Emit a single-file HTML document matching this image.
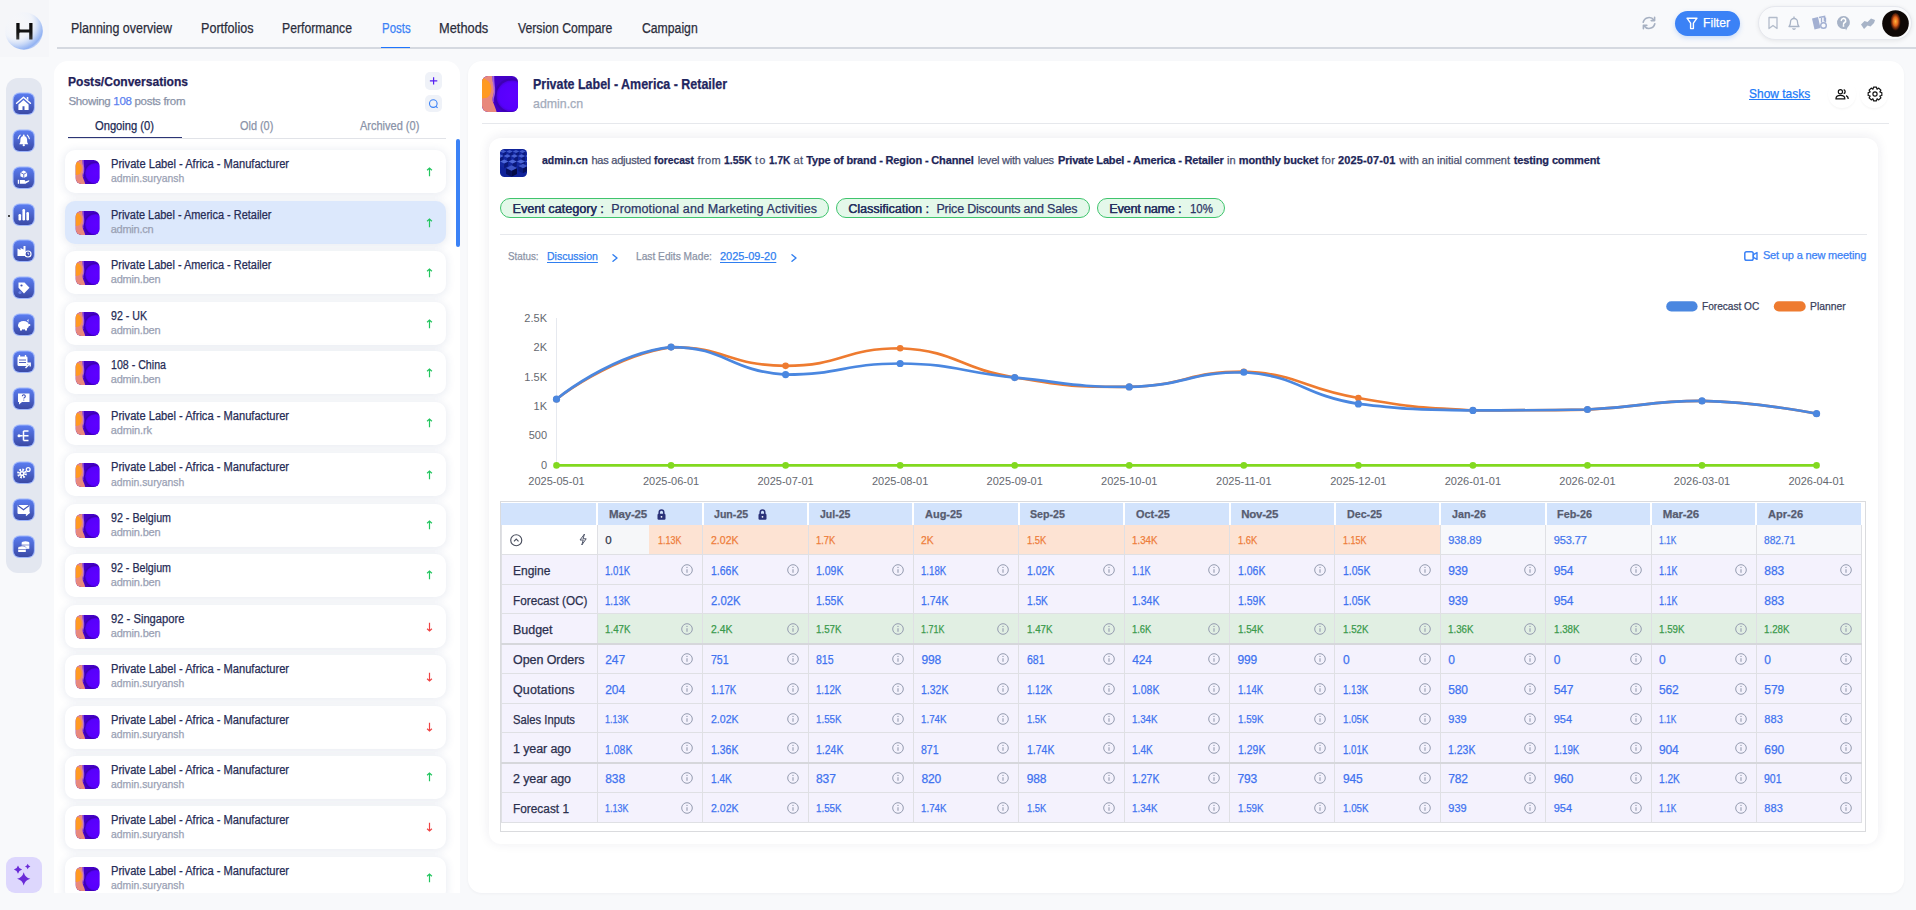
<!DOCTYPE html>
<html><head><meta charset="utf-8"><title>Posts</title>
<style>
html,body{margin:0;padding:0;}
body{width:1916px;height:910px;overflow:hidden;background:#f8f9fb;position:relative;font-family:"Liberation Sans",sans-serif;}
.t{position:absolute;white-space:nowrap;-webkit-text-stroke:0.25px currentColor;}
.r{position:absolute;box-sizing:border-box;}
svg{position:absolute;overflow:visible;}
</style></head><body>

<div class="r" style="left:0.00px;top:0.00px;width:49.00px;height:57.00px;background:#f5f6f9;"></div>
<svg style="left:4.6px;top:12px" width="38" height="38" viewBox="0 0 38 38">
<defs><radialGradient id="lg" cx="0.3" cy="0.28" r="0.82"><stop offset="0" stop-color="#ffffff" stop-opacity="0"/><stop offset="0.5" stop-color="#e3ecfc" stop-opacity="0.25"/><stop offset="0.8" stop-color="#9dbbf4" stop-opacity="0.8"/><stop offset="0.9" stop-color="#86aaf2" stop-opacity="0.9"/><stop offset="1" stop-color="#a8c2f5" stop-opacity="0.4"/></radialGradient></defs>
<circle cx="19" cy="19" r="18.8" fill="url(#lg)"/>
<linearGradient id="hg" x1="0" y1="0" x2="0" y2="1"><stop offset="0" stop-color="#0a0a0a"/><stop offset="0.6" stop-color="#151515"/><stop offset="1" stop-color="#3a3a3a"/></linearGradient><path d="M11.3 10.9h3.3v5.6c0 .6.4 .9 1 .9h8.6v-6.5h3.3v16.7h-3.3v-7.2h-9c-.6 0-.9.3-.9.9v6.3h-3z" fill="url(#hg)"/>
</svg>
<div class="t " style="left:71.30px;top:20.55px;font-size:14px;line-height:14px;color:#2b2d3c;transform:scaleX(0.8885);transform-origin:0 0;">Planning overview</div>
<div class="t " style="left:201.00px;top:20.55px;font-size:14px;line-height:14px;color:#2b2d3c;transform:scaleX(0.8993);transform-origin:0 0;">Portfolios</div>
<div class="t " style="left:282.40px;top:20.55px;font-size:14px;line-height:14px;color:#2b2d3c;transform:scaleX(0.8734);transform-origin:0 0;">Performance</div>
<div class="t " style="left:381.50px;top:20.55px;font-size:14px;line-height:14px;color:#3b82f6;transform:scaleX(0.8171);transform-origin:0 0;">Posts</div>
<div class="t " style="left:439.00px;top:20.55px;font-size:14px;line-height:14px;color:#2b2d3c;transform:scaleX(0.9164);transform-origin:0 0;">Methods</div>
<div class="t " style="left:517.80px;top:20.55px;font-size:14px;line-height:14px;color:#2b2d3c;transform:scaleX(0.8729);transform-origin:0 0;">Version Compare</div>
<div class="t " style="left:641.50px;top:20.55px;font-size:14px;line-height:14px;color:#2b2d3c;transform:scaleX(0.8725);transform-origin:0 0;">Campaign</div>
<div class="r" style="left:57.00px;top:47.00px;width:1859.00px;height:2.00px;background:#d5d9e0;"></div>
<div class="r" style="left:381.00px;top:46.60px;width:29.00px;height:1.60px;background:#1f75fe;"></div>
<svg style="left:1641px;top:16px" width="16" height="14" viewBox="0 0 16 14">
<path d="M2.2 6.2A6 6 0 0 1 13 4.2M13.8 7.8A6 6 0 0 1 3 9.8" fill="none" stroke="#a7b1c2" stroke-width="1.6" stroke-linecap="round"/>
<path d="M13.6 1.2v3.4h-3.4M2.4 12.8V9.4h3.4" fill="none" stroke="#a7b1c2" stroke-width="1.6" stroke-linecap="round" stroke-linejoin="round"/>
</svg>
<div class="r" style="left:1675.00px;top:11.00px;width:65.00px;height:25.00px;background:#3b82f6;border-radius:13px;box-shadow:0 2px 5px rgba(59,130,246,0.25);"></div>
<svg style="left:1686px;top:17px" width="12" height="13" viewBox="0 0 12 13">
<path d="M1 1.2h10L7.4 6.2v5.4H4.6V6.2z" fill="none" stroke="#fff" stroke-width="1.4" stroke-linejoin="round"/></svg>
<div class="t " style="left:1702.70px;top:17.06px;font-size:12.8px;line-height:12.8px;color:#ffffff;transform:scaleX(0.9502);transform-origin:0 0;">Filter</div>
<div class="r" style="left:1758.00px;top:6.00px;width:154.00px;height:34.00px;background:#f9fafc;border-radius:17px;border:1px solid #e6e8ee;box-shadow:0 1px 4px rgba(0,0,0,0.08);"></div>
<svg style="left:1766px;top:16px" width="14" height="14" viewBox="0 0 14 14">
<path d="M3 1.5h8v11l-4-3-4 3z" fill="none" stroke="#b3bccb" stroke-width="1.3" stroke-linejoin="round"/></svg>
<svg style="left:1787px;top:15px" width="14" height="16" viewBox="0 0 14 16">
<path d="M2 11.5c1.2-1 1.5-2.4 1.5-4.5a3.5 3.5 0 0 1 7 0c0 2.1.3 3.5 1.5 4.5z" fill="none" stroke="#a9b4c6" stroke-width="1.3" stroke-linejoin="round"/>
<path d="M5.6 13.3a1.5 1.5 0 0 0 2.8 0" fill="none" stroke="#a9b4c6" stroke-width="1.3"/><path d="M7 1.5v1.5" stroke="#a9b4c6" stroke-width="1.3"/></svg>
<svg style="left:1811px;top:15px" width="17" height="16" viewBox="0 0 17 16">
<path d="M1 3.5l6-1.5 2.5 11-6 1.5z" fill="#a3b0d2"/><path d="M8 2.5l5.5-1v5" fill="none" stroke="#a3b0d2" stroke-width="1.6"/>
<circle cx="12.5" cy="10.5" r="2.8" fill="none" stroke="#a3b0d2" stroke-width="1.4"/><path d="M10.5 3v4.5M14.5 2.5v5" stroke="#a3b0d2" stroke-width="1.3"/></svg>
<svg style="left:1836px;top:15px" width="15" height="16" viewBox="0 0 15 16">
<path d="M7.5 1a6.5 6.5 0 1 0 2 12.7L10 15.5 11.5 12.5A6.5 6.5 0 0 0 7.5 1z" fill="#a7b3c7"/>
<path d="M5.3 5.6a2.2 2.2 0 1 1 3.3 1.9c-.8.5-1.1.9-1.1 1.7" fill="none" stroke="#fff" stroke-width="1.5" stroke-linecap="round"/><circle cx="7.5" cy="10.9" r="0.9" fill="#fff"/></svg>
<svg style="left:1860px;top:16px" width="16" height="14" viewBox="0 0 16 14">
<path d="M1 8.5l3.5-3.5 3 1 3.5-3.5 4 1.5-1 3-3.5 3.5-3-1-3.5 3.5z" fill="#a7b3c7"/></svg>
<svg style="left:1882px;top:9.5px" width="27" height="27" viewBox="0 0 27 27">
<defs><radialGradient id="av" cx="0.5" cy="0.42" r="0.5"><stop offset="0" stop-color="#ffb43a"/><stop offset="0.45" stop-color="#e0601a"/><stop offset="0.8" stop-color="#6a2208" stop-opacity="0.7"/><stop offset="1" stop-color="#120805" stop-opacity="0"/></radialGradient></defs>
<circle cx="13.5" cy="13.5" r="13.3" fill="#0e0806"/><ellipse cx="13.5" cy="13" rx="5.6" ry="10" fill="url(#av)"/></svg>
<div class="r" style="left:6.30px;top:78.00px;width:35.70px;height:495.00px;background:#e3e7f0;border-radius:12px;"></div>
<svg width="0" height="0" style="position:absolute"><defs><linearGradient id="ig" x1="0" y1="0" x2="0" y2="1"><stop offset="0" stop-color="#5a7cf0"/><stop offset="1" stop-color="#3b4aa6"/></linearGradient></defs></svg>
<svg style="left:13.3px;top:92.80px" width="21.5" height="21.5" viewBox="0 0 21.5 21.5"><rect x="-0.4" y="-0.4" width="22.3" height="22.3" rx="6.8" fill="#88a6ff" opacity="0.75"/><rect x="0.6" y="0.6" width="20.3" height="20.3" rx="6" fill="url(#ig)"/><path d="M3.6 10.3L10.5 4.3 17.4 10.3" fill="none" stroke="#fff" stroke-width="1.5" stroke-linecap="round" stroke-linejoin="round"/><path d="M13.8 3.9h1.5v3.3l-1.5-1.3z" fill="#fff"/><path d="M5.4 11.6L10.5 6.9 15.6 11.6V16.9H11.5V13.2H9.5V16.9H5.4z" fill="#fff"/></svg>
<svg style="left:13.3px;top:129.70px" width="21.5" height="21.5" viewBox="0 0 21.5 21.5"><rect x="-0.4" y="-0.4" width="22.3" height="22.3" rx="6.8" fill="#88a6ff" opacity="0.75"/><rect x="0.6" y="0.6" width="20.3" height="20.3" rx="6" fill="url(#ig)"/><path d="M6.2 14.2C7.3 13.2 7.4 11.8 7.4 9.8C7.4 7.6 8.9 5.9 10.75 5.9C12.6 5.9 14.1 7.6 14.1 9.8C14.1 11.8 14.2 13.2 15.3 14.2Z" fill="#fff"/><circle cx="10.75" cy="15.2" r="1.15" fill="#fff"/><circle cx="10.75" cy="5.4" r="0.9" fill="#fff"/><path d="M5.2 8.6A6.5 6.5 0 0 1 7.2 5.1M16.3 8.6A6.5 6.5 0 0 0 14.3 5.1" fill="none" stroke="#fff" stroke-width="1.1" stroke-linecap="round"/></svg>
<svg style="left:13.3px;top:166.60px" width="21.5" height="21.5" viewBox="0 0 21.5 21.5"><rect x="-0.4" y="-0.4" width="22.3" height="22.3" rx="6.8" fill="#88a6ff" opacity="0.75"/><rect x="0.6" y="0.6" width="20.3" height="20.3" rx="6" fill="url(#ig)"/><path d="M10.75 3.6L14.1 5.4V9.3L10.75 11.1L7.4 9.3V5.4Z" fill="#fff"/><path d="M7.4 5.4L10.75 7.2L14.1 5.4M10.75 7.2V11.1" fill="none" stroke="#4456c0" stroke-width="0.8"/><rect x="4.8" y="12.8" width="1.4" height="4" fill="#fff"/><path d="M7 13.1H11.3C12.2 13.1 12.5 13.9 11.9 14.4L15.4 13.4C16.3 13.2 16.7 14 16 14.5L12.4 16.7H7Z" fill="#fff"/></svg>
<svg style="left:13.3px;top:203.50px" width="21.5" height="21.5" viewBox="0 0 21.5 21.5"><rect x="-0.4" y="-0.4" width="22.3" height="22.3" rx="6.8" fill="#88a6ff" opacity="0.75"/><rect x="0.6" y="0.6" width="20.3" height="20.3" rx="6" fill="url(#ig)"/><rect x="5.5" y="10" width="2.6" height="6.5" rx="1.2" fill="#fff"/><rect x="9.45" y="5" width="2.6" height="11.5" rx="1.2" fill="#fff"/><rect x="13.4" y="8" width="2.6" height="8.5" rx="1.2" fill="#fff"/></svg>
<svg style="left:13.3px;top:240.40px" width="21.5" height="21.5" viewBox="0 0 21.5 21.5"><rect x="-0.4" y="-0.4" width="22.3" height="22.3" rx="6.8" fill="#88a6ff" opacity="0.75"/><rect x="0.6" y="0.6" width="20.3" height="20.3" rx="6" fill="url(#ig)"/><path d="M4.5 16V8.5l3 1.5V8l3 1.5V6h2v10z" fill="#fff"/><circle cx="15" cy="14" r="3" fill="#3f51b5" stroke="#fff" stroke-width="1.2"/><path d="M15 12.5v1.6h1.2" stroke="#fff" stroke-width="0.9" fill="none"/></svg>
<svg style="left:13.3px;top:277.30px" width="21.5" height="21.5" viewBox="0 0 21.5 21.5"><rect x="-0.4" y="-0.4" width="22.3" height="22.3" rx="6.8" fill="#88a6ff" opacity="0.75"/><rect x="0.6" y="0.6" width="20.3" height="20.3" rx="6" fill="url(#ig)"/><path d="M5.5 5.5h6l5 5.25-5.5 5.75-5.5-5.75z" fill="#fff"/><circle cx="8.5" cy="8.5" r="1.1" fill="#3f51b5"/><circle cx="7" cy="15.5" r="1.6" fill="#6f86e8"/></svg>
<svg style="left:13.3px;top:314.20px" width="21.5" height="21.5" viewBox="0 0 21.5 21.5"><rect x="-0.4" y="-0.4" width="22.3" height="22.3" rx="6.8" fill="#88a6ff" opacity="0.75"/><rect x="0.6" y="0.6" width="20.3" height="20.3" rx="6" fill="url(#ig)"/><ellipse cx="10.5" cy="11.2" rx="5.5" ry="4.3" fill="#fff"/><path d="M7 14.5v2h2v-1.5M12 14.5v2h2v-1.5" fill="#fff"/><path d="M14 6.5l1.5-1.5v3" fill="#fff"/><circle cx="16.3" cy="11" r="1.1" fill="#fff"/></svg>
<svg style="left:13.3px;top:351.10px" width="21.5" height="21.5" viewBox="0 0 21.5 21.5"><rect x="-0.4" y="-0.4" width="22.3" height="22.3" rx="6.8" fill="#88a6ff" opacity="0.75"/><rect x="0.6" y="0.6" width="20.3" height="20.3" rx="6" fill="url(#ig)"/><rect x="4.5" y="5.5" width="10" height="9.5" rx="1.2" fill="#fff"/><path d="M6.5 4v2.5M12.5 4v2.5" stroke="#fff" stroke-width="1.3"/><path d="M6 9h7M6 11.5h7" stroke="#3f51b5" stroke-width="0.9"/><path d="M12.5 17l4.5-4.5M14 12.3h3.2v3.2" fill="none" stroke="#fff" stroke-width="1.4"/></svg>
<svg style="left:13.3px;top:388.00px" width="21.5" height="21.5" viewBox="0 0 21.5 21.5"><rect x="-0.4" y="-0.4" width="22.3" height="22.3" rx="6.8" fill="#88a6ff" opacity="0.75"/><rect x="0.6" y="0.6" width="20.3" height="20.3" rx="6" fill="url(#ig)"/><path d="M5 5.5h11.5v8.5H9l-3 2.5V14H5z" fill="#fff"/><path d="M9.3 8.2a1.5 1.5 0 1 1 2.3 1.3c-.5.3-.8.6-.8 1.1" fill="none" stroke="#3f51b5" stroke-width="1.1"/><circle cx="10.8" cy="12" r="0.6" fill="#3f51b5"/></svg>
<svg style="left:13.3px;top:424.90px" width="21.5" height="21.5" viewBox="0 0 21.5 21.5"><rect x="-0.4" y="-0.4" width="22.3" height="22.3" rx="6.8" fill="#88a6ff" opacity="0.75"/><rect x="0.6" y="0.6" width="20.3" height="20.3" rx="6" fill="url(#ig)"/><circle cx="6" cy="10.75" r="1.5" fill="#fff"/><path d="M6 10.75h3.5M10.5 6v9.5M10.5 6h5M10.5 10.75h5M10.5 15.5h5" fill="none" stroke="#fff" stroke-width="1.5"/></svg>
<svg style="left:13.3px;top:461.80px" width="21.5" height="21.5" viewBox="0 0 21.5 21.5"><rect x="-0.4" y="-0.4" width="22.3" height="22.3" rx="6.8" fill="#88a6ff" opacity="0.75"/><rect x="0.6" y="0.6" width="20.3" height="20.3" rx="6" fill="url(#ig)"/><circle cx="9" cy="11.5" r="3.6" fill="none" stroke="#fff" stroke-width="2.6" stroke-dasharray="1.6 1.2"/><circle cx="9" cy="11.5" r="2.6" fill="#fff"/><circle cx="9" cy="11.5" r="1" fill="#3f51b5"/><circle cx="15.2" cy="7.5" r="1.9" fill="none" stroke="#fff" stroke-width="1.3"/></svg>
<svg style="left:13.3px;top:498.70px" width="21.5" height="21.5" viewBox="0 0 21.5 21.5"><rect x="-0.4" y="-0.4" width="22.3" height="22.3" rx="6.8" fill="#88a6ff" opacity="0.75"/><rect x="0.6" y="0.6" width="20.3" height="20.3" rx="6" fill="url(#ig)"/><rect x="4.5" y="6" width="12" height="9" rx="1" fill="#fff"/><path d="M4.8 6.5l5.7 4.3 5.7-4.3" fill="none" stroke="#3f51b5" stroke-width="1.1"/><path d="M13 16.5l3.5-3.5" stroke="#fff" stroke-width="1.5"/></svg>
<svg style="left:13.3px;top:535.60px" width="21.5" height="21.5" viewBox="0 0 21.5 21.5"><rect x="-0.4" y="-0.4" width="22.3" height="22.3" rx="6.8" fill="#88a6ff" opacity="0.75"/><rect x="0.6" y="0.6" width="20.3" height="20.3" rx="6" fill="url(#ig)"/><ellipse cx="12.5" cy="6.8" rx="3.8" ry="1.6" fill="#fff"/><rect x="8.7" y="6.8" width="7.6" height="6" fill="#fff"/><ellipse cx="9" cy="11.5" rx="3.8" ry="1.6" fill="#fff" stroke="#3f51b5" stroke-width="0.6"/><rect x="5.2" y="11.5" width="7.6" height="4.5" fill="#fff"/><path d="M5.2 13.5h7.6M8.7 9h7.6" stroke="#3f51b5" stroke-width="0.6"/></svg>
<div class="r" style="left:7.60px;top:214.70px;width:2.00px;height:2.00px;background:#111;border-radius:1px;"></div>
<div class="r" style="left:6.00px;top:857.00px;width:36.00px;height:36.00px;background:#ddd7fd;border-radius:9px;"></div>
<svg style="left:6px;top:857px" width="36" height="36" viewBox="0 0 36 36"><path d="M17.70 15.20Q19.02 20.48 24.30 21.80Q19.02 23.12 17.70 28.40Q16.38 23.12 11.10 21.80Q16.38 20.48 17.70 15.20ZM12.00 8.50Q12.82 11.78 16.10 12.60Q12.82 13.42 12.00 16.70Q11.18 13.42 7.90 12.60Q11.18 11.78 12.00 8.50ZM21.70 6.80Q22.24 8.96 24.40 9.50Q22.24 10.04 21.70 12.20Q21.16 10.04 19.00 9.50Q21.16 8.96 21.70 6.80Z" fill="#6a2bd8"/></svg>
<div class="r" style="left:54.40px;top:61.00px;width:405.60px;height:832.00px;background:#ffffff;border-radius:14px 14px 0 0;"></div>
<div class="t " style="left:68.40px;top:75.10px;font-size:13px;line-height:13px;font-weight:700;color:#1f2158;transform:scaleX(0.9277);transform-origin:0 0;">Posts/Conversations</div>
<div class="t" style="left:68.4px;top:95.67px;font-size:11.5px;line-height:11.5px;color:#8a93a8;letter-spacing:-0.3px">Showing <span style="color:#5b7ff0">108</span> posts from</div>
<div class="r" style="left:424.80px;top:72.00px;width:17.20px;height:17.60px;background:#eff2f8;border-radius:5px;"></div>
<svg style="left:424.8px;top:72px" width="17.2" height="17.6" viewBox="0 0 17.2 17.6"><path d="M8.6 5.2v7.3M4.9 8.8h7.4" stroke="#5520f2" stroke-width="1.2"/></svg>
<div class="r" style="left:424.80px;top:94.50px;width:17.20px;height:17.50px;background:#eff2f8;border-radius:5px;"></div>
<svg style="left:424.8px;top:94.5px" width="17.2" height="17.5" viewBox="0 0 17.2 17.5"><circle cx="8.3" cy="8.6" r="3.8" fill="none" stroke="#3b82f6" stroke-width="1.1"/><path d="M11 11.3l1.6 1.6" stroke="#3b82f6" stroke-width="1.1"/></svg>
<div class="t " style="left:95.40px;top:120.44px;font-size:12px;line-height:12px;color:#222a55;transform:scaleX(0.9312);transform-origin:0 0;">Ongoing (0)</div>
<div class="t " style="left:240.30px;top:120.44px;font-size:12px;line-height:12px;color:#8a93a8;transform:scaleX(0.9083);transform-origin:0 0;">Old (0)</div>
<div class="t " style="left:359.70px;top:120.44px;font-size:12px;line-height:12px;color:#8a93a8;transform:scaleX(0.9168);transform-origin:0 0;">Archived (0)</div>
<div class="r" style="left:68.00px;top:137.90px;width:378.00px;height:1.10px;background:#e1e3e8;"></div>
<div class="r" style="left:68.00px;top:136.80px;width:114.00px;height:1.40px;background:#2c3575;"></div>
<div class="r" style="left:54.4px;top:140px;width:402px;height:753px;overflow:hidden;background:#ffffff">
<div class="r" style="left:10.80px;top:10.00px;width:380.70px;height:43.00px;background:#ffffff;border-radius:10px;box-shadow:0 1px 9px 1px rgba(40,70,130,0.10);"></div>
<svg width="25" height="24" viewBox="0 0 36 36" style="position:absolute;left:20.50px;top:19.70px"><defs><clipPath id="ac0"><rect width="36" height="36" rx="9"/></clipPath><radialGradient id="ap0" cx="0.5" cy="0.5" r="0.5"><stop offset="0" stop-color="#5e00ff"/><stop offset="0.85" stop-color="#5700fc"/><stop offset="1" stop-color="#4d00e0"/></radialGradient></defs><g clip-path="url(#ac0)"><rect width="36" height="36" fill="#4400c6"/><circle cx="30" cy="20" r="16.5" fill="none" stroke="#3a00a8" stroke-width="2.5" opacity="0.6"/><circle cx="30" cy="20" r="15.5" fill="url(#ap0)"/><path d="M0 0H10.2C10.5 6 12 10 12 15C12 19 9.5 22 11 26C12.5 30 14 33 14.6 36H0Z" fill="#e8887c"/><path d="M0 1.9C4 2.5 9 6 9.3 12C9.5 17 7.5 20 5 21.7L0 22.5Z" fill="#ff9a22"/><path d="M10.2 0H12.2C12 6 13.6 12 13.1 17C12.6 21 11 23 12 26L10.8 25.5C9.6 22 12 19 11.5 15C11 10 10.4 6 10.2 0Z" fill="#b874e0" opacity="0.8"/></g></svg>
<div class="t " style="left:56.30px;top:17.94px;font-size:12px;line-height:12px;color:#262c56;transform:scaleX(0.9268);transform-origin:0 0;">Private Label - Africa - Manufacturer</div>
<div class="t " style="left:56.30px;top:33.29px;font-size:11px;line-height:11px;color:#9aa1b4;transform:scaleX(0.9439);transform-origin:0 0;">admin.suryansh</div>
<svg style="left:372.00px;top:26.60px" width="7" height="10" viewBox="0 0 7 10"><path d="M3.5 9.2V1M1.1 3.3l2.4-2.3 2.4 2.3" fill="none" stroke="#22c55e" stroke-width="1.2"/></svg>
<div class="r" style="left:10.80px;top:61.00px;width:380.70px;height:43.00px;background:#dce8fc;border-radius:10px;box-shadow:0 1px 9px 1px rgba(40,70,130,0.10);"></div>
<svg width="25" height="24" viewBox="0 0 36 36" style="position:absolute;left:20.50px;top:70.70px"><defs><clipPath id="ac1"><rect width="36" height="36" rx="9"/></clipPath><radialGradient id="ap1" cx="0.5" cy="0.5" r="0.5"><stop offset="0" stop-color="#5e00ff"/><stop offset="0.85" stop-color="#5700fc"/><stop offset="1" stop-color="#4d00e0"/></radialGradient></defs><g clip-path="url(#ac1)"><rect width="36" height="36" fill="#4400c6"/><circle cx="30" cy="20" r="16.5" fill="none" stroke="#3a00a8" stroke-width="2.5" opacity="0.6"/><circle cx="30" cy="20" r="15.5" fill="url(#ap1)"/><path d="M0 0H10.2C10.5 6 12 10 12 15C12 19 9.5 22 11 26C12.5 30 14 33 14.6 36H0Z" fill="#e8887c"/><path d="M0 1.9C4 2.5 9 6 9.3 12C9.5 17 7.5 20 5 21.7L0 22.5Z" fill="#ff9a22"/><path d="M10.2 0H12.2C12 6 13.6 12 13.1 17C12.6 21 11 23 12 26L10.8 25.5C9.6 22 12 19 11.5 15C11 10 10.4 6 10.2 0Z" fill="#b874e0" opacity="0.8"/></g></svg>
<div class="t " style="left:56.30px;top:68.94px;font-size:12px;line-height:12px;color:#262c56;transform:scaleX(0.9114);transform-origin:0 0;">Private Label - America - Retailer</div>
<div class="t " style="left:56.30px;top:84.29px;font-size:11px;line-height:11px;color:#9aa1b4;letter-spacing:-0.237px;">admin.cn</div>
<svg style="left:372.00px;top:77.60px" width="7" height="10" viewBox="0 0 7 10"><path d="M3.5 9.2V1M1.1 3.3l2.4-2.3 2.4 2.3" fill="none" stroke="#22c55e" stroke-width="1.2"/></svg>
<div class="r" style="left:10.80px;top:111.10px;width:380.70px;height:43.00px;background:#ffffff;border-radius:10px;box-shadow:0 1px 9px 1px rgba(40,70,130,0.10);"></div>
<svg width="25" height="24" viewBox="0 0 36 36" style="position:absolute;left:20.50px;top:120.80px"><defs><clipPath id="ac2"><rect width="36" height="36" rx="9"/></clipPath><radialGradient id="ap2" cx="0.5" cy="0.5" r="0.5"><stop offset="0" stop-color="#5e00ff"/><stop offset="0.85" stop-color="#5700fc"/><stop offset="1" stop-color="#4d00e0"/></radialGradient></defs><g clip-path="url(#ac2)"><rect width="36" height="36" fill="#4400c6"/><circle cx="30" cy="20" r="16.5" fill="none" stroke="#3a00a8" stroke-width="2.5" opacity="0.6"/><circle cx="30" cy="20" r="15.5" fill="url(#ap2)"/><path d="M0 0H10.2C10.5 6 12 10 12 15C12 19 9.5 22 11 26C12.5 30 14 33 14.6 36H0Z" fill="#e8887c"/><path d="M0 1.9C4 2.5 9 6 9.3 12C9.5 17 7.5 20 5 21.7L0 22.5Z" fill="#ff9a22"/><path d="M10.2 0H12.2C12 6 13.6 12 13.1 17C12.6 21 11 23 12 26L10.8 25.5C9.6 22 12 19 11.5 15C11 10 10.4 6 10.2 0Z" fill="#b874e0" opacity="0.8"/></g></svg>
<div class="t " style="left:56.30px;top:119.04px;font-size:12px;line-height:12px;color:#262c56;transform:scaleX(0.9114);transform-origin:0 0;">Private Label - America - Retailer</div>
<div class="t " style="left:56.30px;top:134.39px;font-size:11px;line-height:11px;color:#9aa1b4;letter-spacing:-0.171px;">admin.ben</div>
<svg style="left:372.00px;top:127.70px" width="7" height="10" viewBox="0 0 7 10"><path d="M3.5 9.2V1M1.1 3.3l2.4-2.3 2.4 2.3" fill="none" stroke="#22c55e" stroke-width="1.2"/></svg>
<div class="r" style="left:10.80px;top:162.10px;width:380.70px;height:43.00px;background:#ffffff;border-radius:10px;box-shadow:0 1px 9px 1px rgba(40,70,130,0.10);"></div>
<svg width="25" height="24" viewBox="0 0 36 36" style="position:absolute;left:20.50px;top:171.80px"><defs><clipPath id="ac3"><rect width="36" height="36" rx="9"/></clipPath><radialGradient id="ap3" cx="0.5" cy="0.5" r="0.5"><stop offset="0" stop-color="#5e00ff"/><stop offset="0.85" stop-color="#5700fc"/><stop offset="1" stop-color="#4d00e0"/></radialGradient></defs><g clip-path="url(#ac3)"><rect width="36" height="36" fill="#4400c6"/><circle cx="30" cy="20" r="16.5" fill="none" stroke="#3a00a8" stroke-width="2.5" opacity="0.6"/><circle cx="30" cy="20" r="15.5" fill="url(#ap3)"/><path d="M0 0H10.2C10.5 6 12 10 12 15C12 19 9.5 22 11 26C12.5 30 14 33 14.6 36H0Z" fill="#e8887c"/><path d="M0 1.9C4 2.5 9 6 9.3 12C9.5 17 7.5 20 5 21.7L0 22.5Z" fill="#ff9a22"/><path d="M10.2 0H12.2C12 6 13.6 12 13.1 17C12.6 21 11 23 12 26L10.8 25.5C9.6 22 12 19 11.5 15C11 10 10.4 6 10.2 0Z" fill="#b874e0" opacity="0.8"/></g></svg>
<div class="t " style="left:56.30px;top:170.04px;font-size:12px;line-height:12px;color:#262c56;transform:scaleX(0.8850);transform-origin:0 0;">92 - UK</div>
<div class="t " style="left:56.30px;top:185.39px;font-size:11px;line-height:11px;color:#9aa1b4;letter-spacing:-0.171px;">admin.ben</div>
<svg style="left:372.00px;top:178.70px" width="7" height="10" viewBox="0 0 7 10"><path d="M3.5 9.2V1M1.1 3.3l2.4-2.3 2.4 2.3" fill="none" stroke="#22c55e" stroke-width="1.2"/></svg>
<div class="r" style="left:10.80px;top:211.10px;width:380.70px;height:43.00px;background:#ffffff;border-radius:10px;box-shadow:0 1px 9px 1px rgba(40,70,130,0.10);"></div>
<svg width="25" height="24" viewBox="0 0 36 36" style="position:absolute;left:20.50px;top:220.80px"><defs><clipPath id="ac4"><rect width="36" height="36" rx="9"/></clipPath><radialGradient id="ap4" cx="0.5" cy="0.5" r="0.5"><stop offset="0" stop-color="#5e00ff"/><stop offset="0.85" stop-color="#5700fc"/><stop offset="1" stop-color="#4d00e0"/></radialGradient></defs><g clip-path="url(#ac4)"><rect width="36" height="36" fill="#4400c6"/><circle cx="30" cy="20" r="16.5" fill="none" stroke="#3a00a8" stroke-width="2.5" opacity="0.6"/><circle cx="30" cy="20" r="15.5" fill="url(#ap4)"/><path d="M0 0H10.2C10.5 6 12 10 12 15C12 19 9.5 22 11 26C12.5 30 14 33 14.6 36H0Z" fill="#e8887c"/><path d="M0 1.9C4 2.5 9 6 9.3 12C9.5 17 7.5 20 5 21.7L0 22.5Z" fill="#ff9a22"/><path d="M10.2 0H12.2C12 6 13.6 12 13.1 17C12.6 21 11 23 12 26L10.8 25.5C9.6 22 12 19 11.5 15C11 10 10.4 6 10.2 0Z" fill="#b874e0" opacity="0.8"/></g></svg>
<div class="t " style="left:56.30px;top:219.04px;font-size:12px;line-height:12px;color:#262c56;transform:scaleX(0.8857);transform-origin:0 0;">108 - China</div>
<div class="t " style="left:56.30px;top:234.39px;font-size:11px;line-height:11px;color:#9aa1b4;letter-spacing:-0.171px;">admin.ben</div>
<svg style="left:372.00px;top:227.70px" width="7" height="10" viewBox="0 0 7 10"><path d="M3.5 9.2V1M1.1 3.3l2.4-2.3 2.4 2.3" fill="none" stroke="#22c55e" stroke-width="1.2"/></svg>
<div class="r" style="left:10.80px;top:261.60px;width:380.70px;height:43.00px;background:#ffffff;border-radius:10px;box-shadow:0 1px 9px 1px rgba(40,70,130,0.10);"></div>
<svg width="25" height="24" viewBox="0 0 36 36" style="position:absolute;left:20.50px;top:271.30px"><defs><clipPath id="ac5"><rect width="36" height="36" rx="9"/></clipPath><radialGradient id="ap5" cx="0.5" cy="0.5" r="0.5"><stop offset="0" stop-color="#5e00ff"/><stop offset="0.85" stop-color="#5700fc"/><stop offset="1" stop-color="#4d00e0"/></radialGradient></defs><g clip-path="url(#ac5)"><rect width="36" height="36" fill="#4400c6"/><circle cx="30" cy="20" r="16.5" fill="none" stroke="#3a00a8" stroke-width="2.5" opacity="0.6"/><circle cx="30" cy="20" r="15.5" fill="url(#ap5)"/><path d="M0 0H10.2C10.5 6 12 10 12 15C12 19 9.5 22 11 26C12.5 30 14 33 14.6 36H0Z" fill="#e8887c"/><path d="M0 1.9C4 2.5 9 6 9.3 12C9.5 17 7.5 20 5 21.7L0 22.5Z" fill="#ff9a22"/><path d="M10.2 0H12.2C12 6 13.6 12 13.1 17C12.6 21 11 23 12 26L10.8 25.5C9.6 22 12 19 11.5 15C11 10 10.4 6 10.2 0Z" fill="#b874e0" opacity="0.8"/></g></svg>
<div class="t " style="left:56.30px;top:269.54px;font-size:12px;line-height:12px;color:#262c56;transform:scaleX(0.9268);transform-origin:0 0;">Private Label - Africa - Manufacturer</div>
<div class="t " style="left:56.30px;top:284.89px;font-size:11px;line-height:11px;color:#9aa1b4;letter-spacing:-0.106px;">admin.rk</div>
<svg style="left:372.00px;top:278.20px" width="7" height="10" viewBox="0 0 7 10"><path d="M3.5 9.2V1M1.1 3.3l2.4-2.3 2.4 2.3" fill="none" stroke="#22c55e" stroke-width="1.2"/></svg>
<div class="r" style="left:10.80px;top:313.30px;width:380.70px;height:43.00px;background:#ffffff;border-radius:10px;box-shadow:0 1px 9px 1px rgba(40,70,130,0.10);"></div>
<svg width="25" height="24" viewBox="0 0 36 36" style="position:absolute;left:20.50px;top:323.00px"><defs><clipPath id="ac6"><rect width="36" height="36" rx="9"/></clipPath><radialGradient id="ap6" cx="0.5" cy="0.5" r="0.5"><stop offset="0" stop-color="#5e00ff"/><stop offset="0.85" stop-color="#5700fc"/><stop offset="1" stop-color="#4d00e0"/></radialGradient></defs><g clip-path="url(#ac6)"><rect width="36" height="36" fill="#4400c6"/><circle cx="30" cy="20" r="16.5" fill="none" stroke="#3a00a8" stroke-width="2.5" opacity="0.6"/><circle cx="30" cy="20" r="15.5" fill="url(#ap6)"/><path d="M0 0H10.2C10.5 6 12 10 12 15C12 19 9.5 22 11 26C12.5 30 14 33 14.6 36H0Z" fill="#e8887c"/><path d="M0 1.9C4 2.5 9 6 9.3 12C9.5 17 7.5 20 5 21.7L0 22.5Z" fill="#ff9a22"/><path d="M10.2 0H12.2C12 6 13.6 12 13.1 17C12.6 21 11 23 12 26L10.8 25.5C9.6 22 12 19 11.5 15C11 10 10.4 6 10.2 0Z" fill="#b874e0" opacity="0.8"/></g></svg>
<div class="t " style="left:56.30px;top:321.24px;font-size:12px;line-height:12px;color:#262c56;transform:scaleX(0.9268);transform-origin:0 0;">Private Label - Africa - Manufacturer</div>
<div class="t " style="left:56.30px;top:336.59px;font-size:11px;line-height:11px;color:#9aa1b4;transform:scaleX(0.9439);transform-origin:0 0;">admin.suryansh</div>
<svg style="left:372.00px;top:329.90px" width="7" height="10" viewBox="0 0 7 10"><path d="M3.5 9.2V1M1.1 3.3l2.4-2.3 2.4 2.3" fill="none" stroke="#22c55e" stroke-width="1.2"/></svg>
<div class="r" style="left:10.80px;top:363.80px;width:380.70px;height:43.00px;background:#ffffff;border-radius:10px;box-shadow:0 1px 9px 1px rgba(40,70,130,0.10);"></div>
<svg width="25" height="24" viewBox="0 0 36 36" style="position:absolute;left:20.50px;top:373.50px"><defs><clipPath id="ac7"><rect width="36" height="36" rx="9"/></clipPath><radialGradient id="ap7" cx="0.5" cy="0.5" r="0.5"><stop offset="0" stop-color="#5e00ff"/><stop offset="0.85" stop-color="#5700fc"/><stop offset="1" stop-color="#4d00e0"/></radialGradient></defs><g clip-path="url(#ac7)"><rect width="36" height="36" fill="#4400c6"/><circle cx="30" cy="20" r="16.5" fill="none" stroke="#3a00a8" stroke-width="2.5" opacity="0.6"/><circle cx="30" cy="20" r="15.5" fill="url(#ap7)"/><path d="M0 0H10.2C10.5 6 12 10 12 15C12 19 9.5 22 11 26C12.5 30 14 33 14.6 36H0Z" fill="#e8887c"/><path d="M0 1.9C4 2.5 9 6 9.3 12C9.5 17 7.5 20 5 21.7L0 22.5Z" fill="#ff9a22"/><path d="M10.2 0H12.2C12 6 13.6 12 13.1 17C12.6 21 11 23 12 26L10.8 25.5C9.6 22 12 19 11.5 15C11 10 10.4 6 10.2 0Z" fill="#b874e0" opacity="0.8"/></g></svg>
<div class="t " style="left:56.30px;top:371.74px;font-size:12px;line-height:12px;color:#262c56;transform:scaleX(0.8905);transform-origin:0 0;">92 - Belgium</div>
<div class="t " style="left:56.30px;top:387.09px;font-size:11px;line-height:11px;color:#9aa1b4;letter-spacing:-0.171px;">admin.ben</div>
<svg style="left:372.00px;top:380.40px" width="7" height="10" viewBox="0 0 7 10"><path d="M3.5 9.2V1M1.1 3.3l2.4-2.3 2.4 2.3" fill="none" stroke="#22c55e" stroke-width="1.2"/></svg>
<div class="r" style="left:10.80px;top:413.70px;width:380.70px;height:43.00px;background:#ffffff;border-radius:10px;box-shadow:0 1px 9px 1px rgba(40,70,130,0.10);"></div>
<svg width="25" height="24" viewBox="0 0 36 36" style="position:absolute;left:20.50px;top:423.40px"><defs><clipPath id="ac8"><rect width="36" height="36" rx="9"/></clipPath><radialGradient id="ap8" cx="0.5" cy="0.5" r="0.5"><stop offset="0" stop-color="#5e00ff"/><stop offset="0.85" stop-color="#5700fc"/><stop offset="1" stop-color="#4d00e0"/></radialGradient></defs><g clip-path="url(#ac8)"><rect width="36" height="36" fill="#4400c6"/><circle cx="30" cy="20" r="16.5" fill="none" stroke="#3a00a8" stroke-width="2.5" opacity="0.6"/><circle cx="30" cy="20" r="15.5" fill="url(#ap8)"/><path d="M0 0H10.2C10.5 6 12 10 12 15C12 19 9.5 22 11 26C12.5 30 14 33 14.6 36H0Z" fill="#e8887c"/><path d="M0 1.9C4 2.5 9 6 9.3 12C9.5 17 7.5 20 5 21.7L0 22.5Z" fill="#ff9a22"/><path d="M10.2 0H12.2C12 6 13.6 12 13.1 17C12.6 21 11 23 12 26L10.8 25.5C9.6 22 12 19 11.5 15C11 10 10.4 6 10.2 0Z" fill="#b874e0" opacity="0.8"/></g></svg>
<div class="t " style="left:56.30px;top:421.64px;font-size:12px;line-height:12px;color:#262c56;transform:scaleX(0.8905);transform-origin:0 0;">92 - Belgium</div>
<div class="t " style="left:56.30px;top:436.99px;font-size:11px;line-height:11px;color:#9aa1b4;letter-spacing:-0.171px;">admin.ben</div>
<svg style="left:372.00px;top:430.30px" width="7" height="10" viewBox="0 0 7 10"><path d="M3.5 9.2V1M1.1 3.3l2.4-2.3 2.4 2.3" fill="none" stroke="#22c55e" stroke-width="1.2"/></svg>
<div class="r" style="left:10.80px;top:464.90px;width:380.70px;height:43.00px;background:#ffffff;border-radius:10px;box-shadow:0 1px 9px 1px rgba(40,70,130,0.10);"></div>
<svg width="25" height="24" viewBox="0 0 36 36" style="position:absolute;left:20.50px;top:474.60px"><defs><clipPath id="ac9"><rect width="36" height="36" rx="9"/></clipPath><radialGradient id="ap9" cx="0.5" cy="0.5" r="0.5"><stop offset="0" stop-color="#5e00ff"/><stop offset="0.85" stop-color="#5700fc"/><stop offset="1" stop-color="#4d00e0"/></radialGradient></defs><g clip-path="url(#ac9)"><rect width="36" height="36" fill="#4400c6"/><circle cx="30" cy="20" r="16.5" fill="none" stroke="#3a00a8" stroke-width="2.5" opacity="0.6"/><circle cx="30" cy="20" r="15.5" fill="url(#ap9)"/><path d="M0 0H10.2C10.5 6 12 10 12 15C12 19 9.5 22 11 26C12.5 30 14 33 14.6 36H0Z" fill="#e8887c"/><path d="M0 1.9C4 2.5 9 6 9.3 12C9.5 17 7.5 20 5 21.7L0 22.5Z" fill="#ff9a22"/><path d="M10.2 0H12.2C12 6 13.6 12 13.1 17C12.6 21 11 23 12 26L10.8 25.5C9.6 22 12 19 11.5 15C11 10 10.4 6 10.2 0Z" fill="#b874e0" opacity="0.8"/></g></svg>
<div class="t " style="left:56.30px;top:472.84px;font-size:12px;line-height:12px;color:#262c56;transform:scaleX(0.9337);transform-origin:0 0;">92 - Singapore</div>
<div class="t " style="left:56.30px;top:488.19px;font-size:11px;line-height:11px;color:#9aa1b4;letter-spacing:-0.171px;">admin.ben</div>
<svg style="left:372.00px;top:481.50px" width="7" height="10" viewBox="0 0 7 10"><path d="M3.5 0.8V9M1.1 6.7l2.4 2.3 2.4-2.3" fill="none" stroke="#ef4444" stroke-width="1.2"/></svg>
<div class="r" style="left:10.80px;top:515.00px;width:380.70px;height:43.00px;background:#ffffff;border-radius:10px;box-shadow:0 1px 9px 1px rgba(40,70,130,0.10);"></div>
<svg width="25" height="24" viewBox="0 0 36 36" style="position:absolute;left:20.50px;top:524.70px"><defs><clipPath id="ac10"><rect width="36" height="36" rx="9"/></clipPath><radialGradient id="ap10" cx="0.5" cy="0.5" r="0.5"><stop offset="0" stop-color="#5e00ff"/><stop offset="0.85" stop-color="#5700fc"/><stop offset="1" stop-color="#4d00e0"/></radialGradient></defs><g clip-path="url(#ac10)"><rect width="36" height="36" fill="#4400c6"/><circle cx="30" cy="20" r="16.5" fill="none" stroke="#3a00a8" stroke-width="2.5" opacity="0.6"/><circle cx="30" cy="20" r="15.5" fill="url(#ap10)"/><path d="M0 0H10.2C10.5 6 12 10 12 15C12 19 9.5 22 11 26C12.5 30 14 33 14.6 36H0Z" fill="#e8887c"/><path d="M0 1.9C4 2.5 9 6 9.3 12C9.5 17 7.5 20 5 21.7L0 22.5Z" fill="#ff9a22"/><path d="M10.2 0H12.2C12 6 13.6 12 13.1 17C12.6 21 11 23 12 26L10.8 25.5C9.6 22 12 19 11.5 15C11 10 10.4 6 10.2 0Z" fill="#b874e0" opacity="0.8"/></g></svg>
<div class="t " style="left:56.30px;top:522.94px;font-size:12px;line-height:12px;color:#262c56;transform:scaleX(0.9268);transform-origin:0 0;">Private Label - Africa - Manufacturer</div>
<div class="t " style="left:56.30px;top:538.29px;font-size:11px;line-height:11px;color:#9aa1b4;transform:scaleX(0.9439);transform-origin:0 0;">admin.suryansh</div>
<svg style="left:372.00px;top:531.60px" width="7" height="10" viewBox="0 0 7 10"><path d="M3.5 0.8V9M1.1 6.7l2.4 2.3 2.4-2.3" fill="none" stroke="#ef4444" stroke-width="1.2"/></svg>
<div class="r" style="left:10.80px;top:565.70px;width:380.70px;height:43.00px;background:#ffffff;border-radius:10px;box-shadow:0 1px 9px 1px rgba(40,70,130,0.10);"></div>
<svg width="25" height="24" viewBox="0 0 36 36" style="position:absolute;left:20.50px;top:575.40px"><defs><clipPath id="ac11"><rect width="36" height="36" rx="9"/></clipPath><radialGradient id="ap11" cx="0.5" cy="0.5" r="0.5"><stop offset="0" stop-color="#5e00ff"/><stop offset="0.85" stop-color="#5700fc"/><stop offset="1" stop-color="#4d00e0"/></radialGradient></defs><g clip-path="url(#ac11)"><rect width="36" height="36" fill="#4400c6"/><circle cx="30" cy="20" r="16.5" fill="none" stroke="#3a00a8" stroke-width="2.5" opacity="0.6"/><circle cx="30" cy="20" r="15.5" fill="url(#ap11)"/><path d="M0 0H10.2C10.5 6 12 10 12 15C12 19 9.5 22 11 26C12.5 30 14 33 14.6 36H0Z" fill="#e8887c"/><path d="M0 1.9C4 2.5 9 6 9.3 12C9.5 17 7.5 20 5 21.7L0 22.5Z" fill="#ff9a22"/><path d="M10.2 0H12.2C12 6 13.6 12 13.1 17C12.6 21 11 23 12 26L10.8 25.5C9.6 22 12 19 11.5 15C11 10 10.4 6 10.2 0Z" fill="#b874e0" opacity="0.8"/></g></svg>
<div class="t " style="left:56.30px;top:573.64px;font-size:12px;line-height:12px;color:#262c56;transform:scaleX(0.9268);transform-origin:0 0;">Private Label - Africa - Manufacturer</div>
<div class="t " style="left:56.30px;top:588.99px;font-size:11px;line-height:11px;color:#9aa1b4;transform:scaleX(0.9439);transform-origin:0 0;">admin.suryansh</div>
<svg style="left:372.00px;top:582.30px" width="7" height="10" viewBox="0 0 7 10"><path d="M3.5 0.8V9M1.1 6.7l2.4 2.3 2.4-2.3" fill="none" stroke="#ef4444" stroke-width="1.2"/></svg>
<div class="r" style="left:10.80px;top:615.60px;width:380.70px;height:43.00px;background:#ffffff;border-radius:10px;box-shadow:0 1px 9px 1px rgba(40,70,130,0.10);"></div>
<svg width="25" height="24" viewBox="0 0 36 36" style="position:absolute;left:20.50px;top:625.30px"><defs><clipPath id="ac12"><rect width="36" height="36" rx="9"/></clipPath><radialGradient id="ap12" cx="0.5" cy="0.5" r="0.5"><stop offset="0" stop-color="#5e00ff"/><stop offset="0.85" stop-color="#5700fc"/><stop offset="1" stop-color="#4d00e0"/></radialGradient></defs><g clip-path="url(#ac12)"><rect width="36" height="36" fill="#4400c6"/><circle cx="30" cy="20" r="16.5" fill="none" stroke="#3a00a8" stroke-width="2.5" opacity="0.6"/><circle cx="30" cy="20" r="15.5" fill="url(#ap12)"/><path d="M0 0H10.2C10.5 6 12 10 12 15C12 19 9.5 22 11 26C12.5 30 14 33 14.6 36H0Z" fill="#e8887c"/><path d="M0 1.9C4 2.5 9 6 9.3 12C9.5 17 7.5 20 5 21.7L0 22.5Z" fill="#ff9a22"/><path d="M10.2 0H12.2C12 6 13.6 12 13.1 17C12.6 21 11 23 12 26L10.8 25.5C9.6 22 12 19 11.5 15C11 10 10.4 6 10.2 0Z" fill="#b874e0" opacity="0.8"/></g></svg>
<div class="t " style="left:56.30px;top:623.54px;font-size:12px;line-height:12px;color:#262c56;transform:scaleX(0.9268);transform-origin:0 0;">Private Label - Africa - Manufacturer</div>
<div class="t " style="left:56.30px;top:638.89px;font-size:11px;line-height:11px;color:#9aa1b4;transform:scaleX(0.9439);transform-origin:0 0;">admin.suryansh</div>
<svg style="left:372.00px;top:632.20px" width="7" height="10" viewBox="0 0 7 10"><path d="M3.5 9.2V1M1.1 3.3l2.4-2.3 2.4 2.3" fill="none" stroke="#22c55e" stroke-width="1.2"/></svg>
<div class="r" style="left:10.80px;top:665.70px;width:380.70px;height:43.00px;background:#ffffff;border-radius:10px;box-shadow:0 1px 9px 1px rgba(40,70,130,0.10);"></div>
<svg width="25" height="24" viewBox="0 0 36 36" style="position:absolute;left:20.50px;top:675.40px"><defs><clipPath id="ac13"><rect width="36" height="36" rx="9"/></clipPath><radialGradient id="ap13" cx="0.5" cy="0.5" r="0.5"><stop offset="0" stop-color="#5e00ff"/><stop offset="0.85" stop-color="#5700fc"/><stop offset="1" stop-color="#4d00e0"/></radialGradient></defs><g clip-path="url(#ac13)"><rect width="36" height="36" fill="#4400c6"/><circle cx="30" cy="20" r="16.5" fill="none" stroke="#3a00a8" stroke-width="2.5" opacity="0.6"/><circle cx="30" cy="20" r="15.5" fill="url(#ap13)"/><path d="M0 0H10.2C10.5 6 12 10 12 15C12 19 9.5 22 11 26C12.5 30 14 33 14.6 36H0Z" fill="#e8887c"/><path d="M0 1.9C4 2.5 9 6 9.3 12C9.5 17 7.5 20 5 21.7L0 22.5Z" fill="#ff9a22"/><path d="M10.2 0H12.2C12 6 13.6 12 13.1 17C12.6 21 11 23 12 26L10.8 25.5C9.6 22 12 19 11.5 15C11 10 10.4 6 10.2 0Z" fill="#b874e0" opacity="0.8"/></g></svg>
<div class="t " style="left:56.30px;top:673.64px;font-size:12px;line-height:12px;color:#262c56;transform:scaleX(0.9268);transform-origin:0 0;">Private Label - Africa - Manufacturer</div>
<div class="t " style="left:56.30px;top:688.99px;font-size:11px;line-height:11px;color:#9aa1b4;transform:scaleX(0.9439);transform-origin:0 0;">admin.suryansh</div>
<svg style="left:372.00px;top:682.30px" width="7" height="10" viewBox="0 0 7 10"><path d="M3.5 0.8V9M1.1 6.7l2.4 2.3 2.4-2.3" fill="none" stroke="#ef4444" stroke-width="1.2"/></svg>
<div class="r" style="left:10.80px;top:716.80px;width:380.70px;height:43.00px;background:#ffffff;border-radius:10px;box-shadow:0 1px 9px 1px rgba(40,70,130,0.10);"></div>
<svg width="25" height="24" viewBox="0 0 36 36" style="position:absolute;left:20.50px;top:726.50px"><defs><clipPath id="ac14"><rect width="36" height="36" rx="9"/></clipPath><radialGradient id="ap14" cx="0.5" cy="0.5" r="0.5"><stop offset="0" stop-color="#5e00ff"/><stop offset="0.85" stop-color="#5700fc"/><stop offset="1" stop-color="#4d00e0"/></radialGradient></defs><g clip-path="url(#ac14)"><rect width="36" height="36" fill="#4400c6"/><circle cx="30" cy="20" r="16.5" fill="none" stroke="#3a00a8" stroke-width="2.5" opacity="0.6"/><circle cx="30" cy="20" r="15.5" fill="url(#ap14)"/><path d="M0 0H10.2C10.5 6 12 10 12 15C12 19 9.5 22 11 26C12.5 30 14 33 14.6 36H0Z" fill="#e8887c"/><path d="M0 1.9C4 2.5 9 6 9.3 12C9.5 17 7.5 20 5 21.7L0 22.5Z" fill="#ff9a22"/><path d="M10.2 0H12.2C12 6 13.6 12 13.1 17C12.6 21 11 23 12 26L10.8 25.5C9.6 22 12 19 11.5 15C11 10 10.4 6 10.2 0Z" fill="#b874e0" opacity="0.8"/></g></svg>
<div class="t " style="left:56.30px;top:724.74px;font-size:12px;line-height:12px;color:#262c56;transform:scaleX(0.9268);transform-origin:0 0;">Private Label - Africa - Manufacturer</div>
<div class="t " style="left:56.30px;top:740.09px;font-size:11px;line-height:11px;color:#9aa1b4;transform:scaleX(0.9439);transform-origin:0 0;">admin.suryansh</div>
<svg style="left:372.00px;top:733.40px" width="7" height="10" viewBox="0 0 7 10"><path d="M3.5 9.2V1M1.1 3.3l2.4-2.3 2.4 2.3" fill="none" stroke="#22c55e" stroke-width="1.2"/></svg>
</div>
<div class="r" style="left:456.00px;top:139.40px;width:4.00px;height:108.00px;background:#3b82f6;border-radius:2px;"></div>
<div class="r" style="left:467.80px;top:61.00px;width:1436.00px;height:832.00px;background:#ffffff;border-radius:14px;box-shadow:0 1px 3px rgba(20,30,60,0.04);"></div>
<svg width="36" height="36" viewBox="0 0 36 36" style="position:absolute;left:482px;top:75.8px"><defs><clipPath id="acm"><rect width="36" height="36" rx="6"/></clipPath><radialGradient id="apm" cx="0.5" cy="0.5" r="0.5"><stop offset="0" stop-color="#5e00ff"/><stop offset="0.85" stop-color="#5700fc"/><stop offset="1" stop-color="#4d00e0"/></radialGradient></defs><g clip-path="url(#acm)"><rect width="36" height="36" fill="#4400c6"/><circle cx="30" cy="20" r="16.5" fill="none" stroke="#3a00a8" stroke-width="2.5" opacity="0.6"/><circle cx="30" cy="20" r="15.5" fill="url(#apm)"/><path d="M0 0H10.2C10.5 6 12 10 12 15C12 19 9.5 22 11 26C12.5 30 14 33 14.6 36H0Z" fill="#e8887c"/><path d="M0 1.9C4 2.5 9 6 9.3 12C9.5 17 7.5 20 5 21.7L0 22.5Z" fill="#ff9a22"/><path d="M10.2 0H12.2C12 6 13.6 12 13.1 17C12.6 21 11 23 12 26L10.8 25.5C9.6 22 12 19 11.5 15C11 10 10.4 6 10.2 0Z" fill="#b874e0" opacity="0.8"/></g></svg>
<div class="t " style="left:532.80px;top:76.85px;font-size:14px;line-height:14px;font-weight:700;color:#1f2660;transform:scaleX(0.8894);transform-origin:0 0;">Private Label - America - Retailer</div>
<div class="t " style="left:532.80px;top:97.00px;font-size:13px;line-height:13px;color:#a3abbb;transform:scaleX(0.9511);transform-origin:0 0;">admin.cn</div>
<div class="t " style="left:1748.60px;top:87.40px;font-size:13px;line-height:13px;color:#2079f8;transform:scaleX(0.9204);transform-origin:0 0;text-decoration:underline;text-underline-offset:1.2px;">Show tasks</div>
<div class="r" style="left:1828.00px;top:80.00px;width:28.00px;height:28.00px;background:#ffffff;border-radius:14px;box-shadow:0 1.5px 2px rgba(0,0,0,0.035);"></div>
<div class="r" style="left:1860.00px;top:80.00px;width:28.00px;height:28.00px;background:#ffffff;border-radius:14px;box-shadow:0 1.5px 2px rgba(0,0,0,0.035);"></div>
<svg style="left:1834px;top:88px" width="16" height="12" viewBox="0 0 16 12">
<circle cx="6.4" cy="3.7" r="2.1" fill="none" stroke="#111" stroke-width="1.15"/><path d="M1.9 10.9C1.9 8.6 3.9 7.4 6.4 7.4C8.9 7.4 10.9 8.6 10.9 10.9Z" fill="none" stroke="#111" stroke-width="1.15" stroke-linejoin="round"/>
<path d="M9.7 1.7A2.1 2.1 0 0 1 9.7 5.7" fill="none" stroke="#111" stroke-width="1.3"/><path d="M12.1 7.7C13.4 8.3 14.2 9.5 14.3 10.9" fill="none" stroke="#111" stroke-width="1.4"/></svg>
<svg style="left:1867px;top:86px" width="16" height="16" viewBox="0 0 16 16">
<path d="M6.13 3.04 L6.47 1.17 L9.53 1.17 L9.87 3.04 L10.19 3.17 L11.75 2.09 L13.91 4.25 L12.83 5.81 L12.96 6.13 L14.83 6.47 L14.83 9.53 L12.96 9.87 L12.83 10.19 L13.91 11.75 L11.75 13.91 L10.19 12.83 L9.87 12.96 L9.53 14.83 L6.47 14.83 L6.13 12.96 L5.81 12.83 L4.25 13.91 L2.09 11.75 L3.17 10.19 L3.04 9.87 L1.17 9.53 L1.17 6.47 L3.04 6.13 L3.17 5.81 L2.09 4.25 L4.25 2.09 L5.81 3.17Z" fill="none" stroke="#111" stroke-width="1.15" stroke-linejoin="round"/><circle cx="8" cy="8" r="2.1" fill="none" stroke="#111" stroke-width="1.15"/></svg>
<div class="r" style="left:482.00px;top:123.00px;width:1406.60px;height:1.00px;background:#e6e8ec;"></div>
<div class="r" style="left:489.20px;top:137.80px;width:1388.60px;height:706.20px;background:#ffffff;border-radius:12px;box-shadow:0 -1px 12px rgba(30,40,80,0.085);"></div>
<svg style="left:500px;top:148.8px" width="27" height="28" viewBox="0 0 27 28"><defs><clipPath id="cb"><rect width="27" height="28" rx="4.5"/></clipPath></defs><g clip-path="url(#cb)"><rect width="27" height="28" fill="#10239a"/><g opacity="0.8"><path d="M-6.4 2.5L-3.2 4.1L-3.2 7.620000000000001L-6.4 6.0200000000000005Z" fill="#1428a0"/><path d="M0.0 2.5L-3.2 4.1L-3.2 7.620000000000001L0.0 6.0200000000000005Z" fill="#0a1878"/><path d="M-3.2 0.8999999999999999L0.0 2.5L-3.2 4.1L-6.4 2.5Z" fill="#4e68d8"/></g><g opacity="0.8"><path d="M0.0 2.5L3.2 4.1L3.2 7.620000000000001L0.0 6.0200000000000005Z" fill="#1428a0"/><path d="M6.4 2.5L3.2 4.1L3.2 7.620000000000001L6.4 6.0200000000000005Z" fill="#0a1878"/><path d="M3.2 0.8999999999999999L6.4 2.5L3.2 4.1L0.0 2.5Z" fill="#4e68d8"/></g><g opacity="0.8"><path d="M6.3999999999999995 2.5L9.6 4.1L9.6 7.620000000000001L6.3999999999999995 6.0200000000000005Z" fill="#1428a0"/><path d="M12.8 2.5L9.6 4.1L9.6 7.620000000000001L12.8 6.0200000000000005Z" fill="#0a1878"/><path d="M9.6 0.8999999999999999L12.8 2.5L9.6 4.1L6.3999999999999995 2.5Z" fill="#4e68d8"/></g><g opacity="0.8"><path d="M12.8 2.5L16.0 4.1L16.0 7.620000000000001L12.8 6.0200000000000005Z" fill="#1428a0"/><path d="M19.2 2.5L16.0 4.1L16.0 7.620000000000001L19.2 6.0200000000000005Z" fill="#0a1878"/><path d="M16.0 0.8999999999999999L19.2 2.5L16.0 4.1L12.8 2.5Z" fill="#4e68d8"/></g><g opacity="0.8"><path d="M19.2 2.5L22.4 4.1L22.4 7.620000000000001L19.2 6.0200000000000005Z" fill="#1428a0"/><path d="M25.599999999999998 2.5L22.4 4.1L22.4 7.620000000000001L25.599999999999998 6.0200000000000005Z" fill="#0a1878"/><path d="M22.4 0.8999999999999999L25.599999999999998 2.5L22.4 4.1L19.2 2.5Z" fill="#4e68d8"/></g><g opacity="0.8"><path d="M25.6 2.5L28.8 4.1L28.8 7.620000000000001L25.6 6.0200000000000005Z" fill="#1428a0"/><path d="M32.0 2.5L28.8 4.1L28.8 7.620000000000001L32.0 6.0200000000000005Z" fill="#0a1878"/><path d="M28.8 0.8999999999999999L32.0 2.5L28.8 4.1L25.6 2.5Z" fill="#4e68d8"/></g><g opacity="0.9"><path d="M-3.6 7L0.0 8.8L0.0 12.760000000000002L-3.6 10.96Z" fill="#1428a0"/><path d="M3.6 7L0.0 8.8L0.0 12.760000000000002L3.6 10.96Z" fill="#0a1878"/><path d="M0.0 5.2L3.6 7L0.0 8.8L-3.6 7Z" fill="#4e68d8"/></g><g opacity="0.9"><path d="M3.6 7L7.2 8.8L7.2 12.760000000000002L3.6 10.96Z" fill="#1428a0"/><path d="M10.8 7L7.2 8.8L7.2 12.760000000000002L10.8 10.96Z" fill="#0a1878"/><path d="M7.2 5.2L10.8 7L7.2 8.8L3.6 7Z" fill="#4e68d8"/></g><g opacity="0.9"><path d="M10.8 7L14.4 8.8L14.4 12.760000000000002L10.8 10.96Z" fill="#1428a0"/><path d="M18.0 7L14.4 8.8L14.4 12.760000000000002L18.0 10.96Z" fill="#0a1878"/><path d="M14.4 5.2L18.0 7L14.4 8.8L10.8 7Z" fill="#4e68d8"/></g><g opacity="0.9"><path d="M18.0 7L21.6 8.8L21.6 12.760000000000002L18.0 10.96Z" fill="#1428a0"/><path d="M25.200000000000003 7L21.6 8.8L21.6 12.760000000000002L25.200000000000003 10.96Z" fill="#0a1878"/><path d="M21.6 5.2L25.200000000000003 7L21.6 8.8L18.0 7Z" fill="#4e68d8"/></g><g opacity="0.9"><path d="M25.2 7L28.8 8.8L28.8 12.760000000000002L25.2 10.96Z" fill="#1428a0"/><path d="M32.4 7L28.8 8.8L28.8 12.760000000000002L32.4 10.96Z" fill="#0a1878"/><path d="M28.8 5.2L32.4 7L28.8 8.8L25.2 7Z" fill="#4e68d8"/></g><g opacity="1.0"><path d="M-8.4 12.5L-4.2 14.6L-4.2 19.22L-8.4 17.12Z" fill="#1428a0"/><path d="M0.0 12.5L-4.2 14.6L-4.2 19.22L0.0 17.12Z" fill="#0a1878"/><path d="M-4.2 10.4L0.0 12.5L-4.2 14.6L-8.4 12.5Z" fill="#4e68d8"/></g><g opacity="1.0"><path d="M0.0 12.5L4.2 14.6L4.2 19.22L0.0 17.12Z" fill="#1428a0"/><path d="M8.4 12.5L4.2 14.6L4.2 19.22L8.4 17.12Z" fill="#0a1878"/><path d="M4.2 10.4L8.4 12.5L4.2 14.6L0.0 12.5Z" fill="#4e68d8"/></g><g opacity="1.0"><path d="M8.399999999999999 12.5L12.6 14.6L12.6 19.22L8.399999999999999 17.12Z" fill="#1428a0"/><path d="M16.8 12.5L12.6 14.6L12.6 19.22L16.8 17.12Z" fill="#0a1878"/><path d="M12.6 10.4L16.8 12.5L12.6 14.6L8.399999999999999 12.5Z" fill="#4e68d8"/></g><g opacity="1.0"><path d="M16.8 12.5L21.0 14.6L21.0 19.22L16.8 17.12Z" fill="#1428a0"/><path d="M25.2 12.5L21.0 14.6L21.0 19.22L25.2 17.12Z" fill="#0a1878"/><path d="M21.0 10.4L25.2 12.5L21.0 14.6L16.8 12.5Z" fill="#4e68d8"/></g><g opacity="1.0"><path d="M25.2 12.5L29.4 14.6L29.4 19.22L25.2 17.12Z" fill="#1428a0"/><path d="M33.6 12.5L29.4 14.6L29.4 19.22L33.6 17.12Z" fill="#0a1878"/><path d="M29.4 10.4L33.6 12.5L29.4 14.6L25.2 12.5Z" fill="#4e68d8"/></g><g opacity="1"><path d="M6.0 19L11.5 21.75L11.5 27.8L6.0 25.05Z" fill="#06105e"/><path d="M17.0 19L11.5 21.75L11.5 27.8L17.0 25.05Z" fill="#030a45"/><path d="M11.5 16.25L17.0 19L11.5 21.75L6.0 19Z" fill="#3d55c6"/></g><g opacity="1"><path d="M18.4 17L23 19.3L23 24.36L18.4 22.06Z" fill="#0a1a80"/><path d="M27.6 17L23 19.3L23 24.36L27.6 22.06Z" fill="#06105e"/><path d="M23 14.7L27.6 17L23 19.3L18.4 17Z" fill="#3d55c6"/></g></g></svg>
<div class="t " style="left:541.70px;top:154.69px;font-size:11px;line-height:11px;font-weight:700;color:#1e2658;transform:scaleX(0.9526);transform-origin:0 0;">admin.cn</div>
<div class="t " style="left:591.50px;top:154.69px;font-size:11px;line-height:11px;color:#4b5170;letter-spacing:-0.243px;">has adjusted</div>
<div class="t " style="left:654.40px;top:154.69px;font-size:11px;line-height:11px;font-weight:700;color:#1e2658;transform:scaleX(0.9348);transform-origin:0 0;">forecast</div>
<div class="t " style="left:697.60px;top:154.69px;font-size:11px;line-height:11px;color:#4b5170;letter-spacing:0.367px;">from</div>
<div class="t " style="left:723.90px;top:154.69px;font-size:11px;line-height:11px;font-weight:700;color:#1e2658;transform:scaleX(0.9465);transform-origin:0 0;">1.55K</div>
<div class="t " style="left:755.00px;top:154.69px;font-size:11px;line-height:11px;color:#4b5170;letter-spacing:1.315px;">to</div>
<div class="t " style="left:768.70px;top:154.69px;font-size:11px;line-height:11px;font-weight:700;color:#1e2658;transform:scaleX(0.9177);transform-origin:0 0;">1.7K</div>
<div class="t " style="left:793.50px;top:154.69px;font-size:11px;line-height:11px;color:#4b5170;letter-spacing:0.315px;">at</div>
<div class="t " style="left:806.20px;top:154.69px;font-size:11px;line-height:11px;font-weight:700;color:#1e2658;letter-spacing:-0.144px;">Type of brand - Region - Channel</div>
<div class="t " style="left:977.80px;top:154.69px;font-size:11px;line-height:11px;color:#4b5170;letter-spacing:-0.242px;">level with values</div>
<div class="t " style="left:1058.00px;top:154.69px;font-size:11px;line-height:11px;font-weight:700;color:#1e2658;letter-spacing:-0.172px;">Private Label - America - Retailer</div>
<div class="t " style="left:1227.00px;top:154.69px;font-size:11px;line-height:11px;color:#4b5170;letter-spacing:0.020px;">in</div>
<div class="t " style="left:1238.80px;top:154.69px;font-size:11px;line-height:11px;font-weight:700;color:#1e2658;letter-spacing:-0.130px;">monthly bucket</div>
<div class="t " style="left:1321.50px;top:154.69px;font-size:11px;line-height:11px;color:#4b5170;letter-spacing:0.242px;">for</div>
<div class="t " style="left:1338.00px;top:154.69px;font-size:11px;line-height:11px;font-weight:700;color:#1e2658;letter-spacing:0.126px;">2025-07-01</div>
<div class="t " style="left:1399.36px;top:154.69px;font-size:11px;line-height:11px;color:#4b5170;letter-spacing:-0.028px;">with an initial comment</div>
<div class="t " style="left:1513.80px;top:154.69px;font-size:11px;line-height:11px;font-weight:700;color:#1e2658;letter-spacing:-0.129px;">testing comment</div>
<div class="r" style="left:500.00px;top:198.20px;width:328.80px;height:20.30px;background:#e4f8ea;border-radius:11px;border:1.3px solid #3fc46d;"></div>
<div class="t " style="left:512.50px;top:202.82px;font-size:12.5px;line-height:12.5px;color:#26305f;letter-spacing:0.059px;text-shadow:0.3px 0 0 #26305f;">Event category :</div>
<div class="t " style="left:611.20px;top:202.82px;font-size:12.5px;line-height:12.5px;color:#2c3566;letter-spacing:0.123px;">Promotional and Marketing Activities</div>
<div class="r" style="left:836.00px;top:198.20px;width:254.00px;height:20.30px;background:#e4f8ea;border-radius:11px;border:1.3px solid #3fc46d;"></div>
<div class="t " style="left:848.20px;top:202.82px;font-size:12.5px;line-height:12.5px;color:#26305f;letter-spacing:0.009px;text-shadow:0.3px 0 0 #26305f;">Classification :</div>
<div class="t " style="left:936.40px;top:202.82px;font-size:12.5px;line-height:12.5px;color:#2c3566;letter-spacing:-0.197px;">Price Discounts and Sales</div>
<div class="r" style="left:1097.00px;top:198.20px;width:127.80px;height:20.30px;background:#e4f8ea;border-radius:11px;border:1.3px solid #3fc46d;"></div>
<div class="t " style="left:1109.30px;top:202.82px;font-size:12.5px;line-height:12.5px;color:#26305f;letter-spacing:-0.139px;text-shadow:0.3px 0 0 #26305f;">Event name :</div>
<div class="t " style="left:1189.50px;top:202.82px;font-size:12.5px;line-height:12.5px;color:#2c3566;transform:scaleX(0.9160);transform-origin:0 0;">10%</div>
<div class="r" style="left:500.00px;top:234.00px;width:1366.80px;height:1.00px;background:#e6e8ec;"></div>
<div class="t " style="left:507.50px;top:250.67px;font-size:11.5px;line-height:11.5px;color:#8b93a6;transform:scaleX(0.8542);transform-origin:0 0;">Status:</div>
<div class="t " style="left:547.10px;top:250.67px;font-size:11.5px;line-height:11.5px;color:#2f7ef0;transform:scaleX(0.9154);transform-origin:0 0;text-decoration:underline;text-underline-offset:1.5px;">Discussion</div>
<div class="t " style="left:635.70px;top:250.67px;font-size:11.5px;line-height:11.5px;color:#8b93a6;transform:scaleX(0.8859);transform-origin:0 0;">Last Edits Made:</div>
<div class="t " style="left:720.40px;top:250.67px;font-size:11.5px;line-height:11.5px;color:#2f7ef0;transform:scaleX(0.9571);transform-origin:0 0;text-decoration:underline;text-underline-offset:1.5px;">2025-09-20</div>
<svg style="left:611.9px;top:254.2px" width="6" height="8" viewBox="0 0 6 8"><path d="M1 0.8l4 3.2-4 3.2" fill="none" stroke="#2f7ef0" stroke-width="1.4" stroke-linecap="round" stroke-linejoin="round"/></svg>
<svg style="left:790.5px;top:254.2px" width="6" height="8" viewBox="0 0 6 8"><path d="M1 0.8l4 3.2-4 3.2" fill="none" stroke="#2f7ef0" stroke-width="1.4" stroke-linecap="round" stroke-linejoin="round"/></svg>
<svg style="left:1744px;top:251px" width="14" height="10" viewBox="0 0 14 10"><rect x="0.8" y="0.8" width="8.4" height="8.4" rx="1.8" fill="none" stroke="#3b82f6" stroke-width="1.5"/><path d="M9.4 3.6l3.6-2v6.8l-3.6-2z" fill="none" stroke="#3b82f6" stroke-width="1.4" stroke-linejoin="round"/></svg>
<div class="t " style="left:1762.90px;top:250.29px;font-size:11px;line-height:11px;color:#3b82f6;letter-spacing:-0.159px;">Set up a new meeting</div>
<svg style="left:0;top:0" width="1916" height="910" viewBox="0 0 1916 910"><line x1="556.5" y1="318" x2="556.5" y2="465" stroke="#e6e9ef" stroke-width="1"/><g font-family="Liberation Sans" font-size="11" fill="#65686f" text-anchor="end"><text x="547" y="322.08">2.5K</text><text x="547" y="351.36">2K</text><text x="547" y="380.64">1.5K</text><text x="547" y="409.93">1K</text><text x="547" y="439.21">500</text><text x="547" y="468.50">0</text></g><g font-family="Liberation Sans" font-size="11" fill="#65686f" text-anchor="middle"><text x="556.50" y="485.4">2025-05-01</text><text x="671.05" y="485.4">2025-06-01</text><text x="785.60" y="485.4">2025-07-01</text><text x="900.15" y="485.4">2025-08-01</text><text x="1014.70" y="485.4">2025-09-01</text><text x="1129.25" y="485.4">2025-10-01</text><text x="1243.80" y="485.4">2025-11-01</text><text x="1358.35" y="485.4">2025-12-01</text><text x="1472.90" y="485.4">2026-01-01</text><text x="1587.45" y="485.4">2026-02-01</text><text x="1702.00" y="485.4">2026-03-01</text><text x="1816.55" y="485.4">2026-04-01</text></g><path d="M556.50,399.22 C556.50,399.22 611.46,355.77 671.05,347.09 C726.01,347.09 728.28,365.54 785.60,365.83 C842.83,365.83 843.45,348.26 900.15,348.26 C958.00,351.22 956.61,367.74 1014.70,377.54 C1071.16,386.92 1072.13,386.92 1129.25,386.92 C1186.68,385.45 1187.01,371.69 1243.80,371.69 C1301.56,374.49 1300.50,388.27 1358.35,398.04 C1415.05,407.63 1415.46,407.53 1472.90,410.41 C1530.01,410.41 1530.25,410.41 1587.45,409.54 C1644.80,407.18 1644.82,400.97 1702.00,400.97 C1759.37,402.02 1816.55,413.70 1816.55,413.70" fill="none" stroke="#ee7b30" stroke-width="2.7"/><path d="M556.50,399.22 C556.50,399.22 611.88,353.44 671.05,347.09 C726.43,347.09 727.66,370.47 785.60,374.62 C842.21,374.62 842.95,363.49 900.15,363.49 C957.50,364.22 957.31,371.68 1014.70,377.54 C1071.86,383.39 1072.11,386.92 1129.25,386.92 C1186.66,385.60 1187.34,372.27 1243.80,372.27 C1301.89,376.58 1300.07,394.20 1358.35,403.90 C1414.62,410.40 1415.58,409.00 1472.90,410.40 C1530.13,410.40 1530.25,410.40 1587.45,409.52 C1644.80,407.16 1644.82,400.97 1702.00,400.97 C1759.37,402.01 1816.55,413.68 1816.55,413.68" fill="none" stroke="#4a87e0" stroke-width="2.7"/><line x1="556.5" y1="465.4" x2="1816.55" y2="465.4" stroke="#82d91f" stroke-width="2.8"/><circle cx="556.50" cy="399.22" r="3.3" fill="#ee7b30"/><circle cx="671.05" cy="347.09" r="3.3" fill="#ee7b30"/><circle cx="785.60" cy="365.83" r="3.3" fill="#ee7b30"/><circle cx="900.15" cy="348.26" r="3.3" fill="#ee7b30"/><circle cx="1014.70" cy="377.54" r="3.3" fill="#ee7b30"/><circle cx="1129.25" cy="386.92" r="3.3" fill="#ee7b30"/><circle cx="1243.80" cy="371.69" r="3.3" fill="#ee7b30"/><circle cx="1358.35" cy="398.04" r="3.3" fill="#ee7b30"/><circle cx="1472.90" cy="410.41" r="3.3" fill="#ee7b30"/><circle cx="1587.45" cy="409.54" r="3.3" fill="#ee7b30"/><circle cx="1702.00" cy="400.97" r="3.3" fill="#ee7b30"/><circle cx="1816.55" cy="413.70" r="3.3" fill="#ee7b30"/><circle cx="556.50" cy="399.22" r="3.6" fill="#4a87e0"/><circle cx="671.05" cy="347.09" r="3.6" fill="#4a87e0"/><circle cx="785.60" cy="374.62" r="3.6" fill="#4a87e0"/><circle cx="900.15" cy="363.49" r="3.6" fill="#4a87e0"/><circle cx="1014.70" cy="377.54" r="3.6" fill="#4a87e0"/><circle cx="1129.25" cy="386.92" r="3.6" fill="#4a87e0"/><circle cx="1243.80" cy="372.27" r="3.6" fill="#4a87e0"/><circle cx="1358.35" cy="403.90" r="3.6" fill="#4a87e0"/><circle cx="1472.90" cy="410.40" r="3.6" fill="#4a87e0"/><circle cx="1587.45" cy="409.52" r="3.6" fill="#4a87e0"/><circle cx="1702.00" cy="400.97" r="3.6" fill="#4a87e0"/><circle cx="1816.55" cy="413.68" r="3.6" fill="#4a87e0"/><circle cx="556.50" cy="465.4" r="3.3" fill="#82d91f"/><circle cx="671.05" cy="465.4" r="3.3" fill="#82d91f"/><circle cx="785.60" cy="465.4" r="3.3" fill="#82d91f"/><circle cx="900.15" cy="465.4" r="3.3" fill="#82d91f"/><circle cx="1014.70" cy="465.4" r="3.3" fill="#82d91f"/><circle cx="1129.25" cy="465.4" r="3.3" fill="#82d91f"/><circle cx="1243.80" cy="465.4" r="3.3" fill="#82d91f"/><circle cx="1358.35" cy="465.4" r="3.3" fill="#82d91f"/><circle cx="1472.90" cy="465.4" r="3.3" fill="#82d91f"/><circle cx="1587.45" cy="465.4" r="3.3" fill="#82d91f"/><circle cx="1702.00" cy="465.4" r="3.3" fill="#82d91f"/><circle cx="1816.55" cy="465.4" r="3.3" fill="#82d91f"/><rect x="1666.2" y="301.3" width="31.4" height="10.2" rx="5.1" fill="#4a87e0"/><rect x="1773.8" y="301.3" width="31.9" height="10.2" rx="5.1" fill="#ee7b30"/></svg>
<div class="t " style="left:1702.00px;top:300.89px;font-size:11px;line-height:11px;color:#3a3f5c;transform:scaleX(0.9187);transform-origin:0 0;">Forecast OC</div>
<div class="t " style="left:1810.00px;top:300.89px;font-size:11px;line-height:11px;color:#3a3f5c;transform:scaleX(0.9394);transform-origin:0 0;">Planner</div>
<div class="r" style="left:500.40px;top:501.30px;width:1365.20px;height:330.70px;background:#ffffff;border:1px solid #dadbde;"></div>
<div class="r" style="left:501.00px;top:502.90px;width:1360.70px;height:22.10px;background:#d2e3fc;"></div>
<div class="r" style="left:596.30px;top:502.90px;width:2.00px;height:22.10px;background:#ffffff;"></div>
<div class="r" style="left:701.67px;top:502.90px;width:2.00px;height:22.10px;background:#ffffff;"></div>
<div class="r" style="left:807.04px;top:502.90px;width:2.00px;height:22.10px;background:#ffffff;"></div>
<div class="r" style="left:912.41px;top:502.90px;width:2.00px;height:22.10px;background:#ffffff;"></div>
<div class="r" style="left:1017.78px;top:502.90px;width:2.00px;height:22.10px;background:#ffffff;"></div>
<div class="r" style="left:1123.15px;top:502.90px;width:2.00px;height:22.10px;background:#ffffff;"></div>
<div class="r" style="left:1228.52px;top:502.90px;width:2.00px;height:22.10px;background:#ffffff;"></div>
<div class="r" style="left:1333.89px;top:502.90px;width:2.00px;height:22.10px;background:#ffffff;"></div>
<div class="r" style="left:1439.26px;top:502.90px;width:2.00px;height:22.10px;background:#ffffff;"></div>
<div class="r" style="left:1544.63px;top:502.90px;width:2.00px;height:22.10px;background:#ffffff;"></div>
<div class="r" style="left:1650.00px;top:502.90px;width:2.00px;height:22.10px;background:#ffffff;"></div>
<div class="r" style="left:1755.37px;top:502.90px;width:2.00px;height:22.10px;background:#ffffff;"></div>
<div class="r" style="left:1860.70px;top:502.90px;width:2.00px;height:22.10px;background:#ffffff;"></div>
<div class="t " style="left:609.00px;top:509.17px;font-size:11.5px;line-height:11.5px;font-weight:700;color:#575c70;letter-spacing:-0.157px;">May-25</div>
<div class="t " style="left:714.37px;top:509.17px;font-size:11.5px;line-height:11.5px;font-weight:700;color:#575c70;transform:scaleX(0.9221);transform-origin:0 0;">Jun-25</div>
<div class="t " style="left:819.74px;top:509.17px;font-size:11.5px;line-height:11.5px;font-weight:700;color:#575c70;transform:scaleX(0.9117);transform-origin:0 0;">Jul-25</div>
<div class="t " style="left:925.11px;top:509.17px;font-size:11.5px;line-height:11.5px;font-weight:700;color:#575c70;transform:scaleX(0.9542);transform-origin:0 0;">Aug-25</div>
<div class="t " style="left:1030.48px;top:509.17px;font-size:11.5px;line-height:11.5px;font-weight:700;color:#575c70;transform:scaleX(0.9279);transform-origin:0 0;">Sep-25</div>
<div class="t " style="left:1135.85px;top:509.17px;font-size:11.5px;line-height:11.5px;font-weight:700;color:#575c70;transform:scaleX(0.9479);transform-origin:0 0;">Oct-25</div>
<div class="t " style="left:1241.22px;top:509.17px;font-size:11.5px;line-height:11.5px;font-weight:700;color:#575c70;letter-spacing:-0.230px;">Nov-25</div>
<div class="t " style="left:1346.59px;top:509.17px;font-size:11.5px;line-height:11.5px;font-weight:700;color:#575c70;transform:scaleX(0.9279);transform-origin:0 0;">Dec-25</div>
<div class="t " style="left:1451.96px;top:509.17px;font-size:11.5px;line-height:11.5px;font-weight:700;color:#575c70;transform:scaleX(0.9299);transform-origin:0 0;">Jan-26</div>
<div class="t " style="left:1557.33px;top:509.17px;font-size:11.5px;line-height:11.5px;font-weight:700;color:#575c70;transform:scaleX(0.9437);transform-origin:0 0;">Feb-26</div>
<div class="t " style="left:1662.70px;top:509.17px;font-size:11.5px;line-height:11.5px;font-weight:700;color:#575c70;letter-spacing:-0.138px;">Mar-26</div>
<div class="t " style="left:1768.07px;top:509.17px;font-size:11.5px;line-height:11.5px;font-weight:700;color:#575c70;transform:scaleX(0.9656);transform-origin:0 0;">Apr-26</div>
<svg style="left:657.00px;top:508.5px" width="9" height="11" viewBox="0 0 9 11"><path d="M2.2 5V3.4a2.3 2.3 0 0 1 4.6 0V5" fill="none" stroke="#2a3178" stroke-width="1.5"/><rect x="0.5" y="4.8" width="8" height="6" rx="1.2" fill="#2a3178"/><circle cx="4.5" cy="7.8" r="0.9" fill="#fff"/></svg>
<svg style="left:758.00px;top:508.5px" width="9" height="11" viewBox="0 0 9 11"><path d="M2.2 5V3.4a2.3 2.3 0 0 1 4.6 0V5" fill="none" stroke="#2a3178" stroke-width="1.5"/><rect x="0.5" y="4.8" width="8" height="6" rx="1.2" fill="#2a3178"/><circle cx="4.5" cy="7.8" r="0.9" fill="#fff"/></svg>
<div class="r" style="left:501.00px;top:525.00px;width:96.30px;height:29.78px;background:#ffffff;"></div>
<div class="r" style="left:597.30px;top:525.00px;width:52.10px;height:29.78px;background:#f6f7f9;"></div>
<div class="r" style="left:649.40px;top:525.00px;width:790.86px;height:29.78px;background:#fde3d3;"></div>
<div class="r" style="left:1440.26px;top:525.00px;width:421.44px;height:29.78px;background:#f7f8fb;"></div>
<svg style="left:510px;top:533.50px" width="12.5" height="12.5" viewBox="0 0 12 12"><circle cx="6" cy="6" r="5.3" fill="none" stroke="#4a4f5e" stroke-width="1.1"/><path d="M3.8 7l2.2-2.2L8.2 7" fill="none" stroke="#4a4f5e" stroke-width="1.1"/></svg>
<svg style="left:577.5px;top:533.00px" width="10" height="13" viewBox="0 0 10 13"><path d="M6.5 1L2 7h3.2L3.8 12 8.2 5.8H5z" fill="none" stroke="#50566a" stroke-width="1"/></svg>
<div class="t " style="left:605.30px;top:535.07px;font-size:11.5px;line-height:11.5px;color:#30354a;">0</div>
<div class="t " style="left:657.70px;top:534.99px;font-size:11px;line-height:11px;color:#ee7d3a;transform:scaleX(0.8147);transform-origin:0 0;">1.13K</div>
<div class="t " style="left:710.67px;top:534.99px;font-size:11px;line-height:11px;color:#ee7d3a;transform:scaleX(0.9570);transform-origin:0 0;">2.02K</div>
<div class="t " style="left:816.04px;top:534.99px;font-size:11px;line-height:11px;color:#ee7d3a;transform:scaleX(0.8557);transform-origin:0 0;">1.7K</div>
<div class="t " style="left:921.41px;top:534.99px;font-size:11px;line-height:11px;color:#ee7d3a;transform:scaleX(0.9386);transform-origin:0 0;">2K</div>
<div class="t " style="left:1026.78px;top:534.99px;font-size:11px;line-height:11px;color:#ee7d3a;transform:scaleX(0.8557);transform-origin:0 0;">1.5K</div>
<div class="t " style="left:1132.15px;top:534.99px;font-size:11px;line-height:11px;color:#ee7d3a;transform:scaleX(0.8859);transform-origin:0 0;">1.34K</div>
<div class="t " style="left:1237.52px;top:534.99px;font-size:11px;line-height:11px;color:#ee7d3a;transform:scaleX(0.8557);transform-origin:0 0;">1.6K</div>
<div class="t " style="left:1342.89px;top:534.99px;font-size:11px;line-height:11px;color:#ee7d3a;transform:scaleX(0.8147);transform-origin:0 0;">1.15K</div>
<div class="t " style="left:1448.26px;top:534.99px;font-size:11px;line-height:11px;color:#4677ee;letter-spacing:-0.073px;">938.89</div>
<div class="t " style="left:1553.63px;top:534.99px;font-size:11px;line-height:11px;color:#4677ee;letter-spacing:-0.073px;">953.77</div>
<div class="t " style="left:1659.00px;top:534.99px;font-size:11px;line-height:11px;color:#4677ee;transform:scaleX(0.7652);transform-origin:0 0;">1.1K</div>
<div class="t " style="left:1764.37px;top:534.99px;font-size:11px;line-height:11px;color:#4677ee;transform:scaleX(0.9283);transform-origin:0 0;">882.71</div>
<div class="r" style="left:501.00px;top:553.78px;width:1360.70px;height:1.00px;background:#dfe0e4;"></div>
<div class="r" style="left:501.00px;top:554.78px;width:96.30px;height:29.78px;background:#f4f2fd;"></div>
<div class="r" style="left:597.30px;top:554.78px;width:1264.40px;height:29.78px;background:#f4f2fd;"></div>
<div class="t " style="left:513.00px;top:564.80px;font-size:12.5px;line-height:12.5px;color:#2b2f4d;transform:scaleX(0.9605);transform-origin:0 0;">Engine</div>
<div class="t " style="left:605.30px;top:564.82px;font-size:12px;line-height:12px;color:#3f72f0;transform:scaleX(0.8031);transform-origin:0 0;">1.01K</div>
<svg style="left:681.30px;top:563.78px" width="12" height="12" viewBox="0 0 12 12"><circle cx="6" cy="6" r="5.3" fill="none" stroke="#959cb0" stroke-width="1"/><path d="M6 5.2v3.6" stroke="#959cb0" stroke-width="1.1"/><circle cx="6" cy="3.4" r="0.65" fill="#959cb0"/></svg>
<div class="t " style="left:710.67px;top:564.82px;font-size:12px;line-height:12px;color:#3f72f0;transform:scaleX(0.8732);transform-origin:0 0;">1.66K</div>
<svg style="left:786.67px;top:563.78px" width="12" height="12" viewBox="0 0 12 12"><circle cx="6" cy="6" r="5.3" fill="none" stroke="#959cb0" stroke-width="1"/><path d="M6 5.2v3.6" stroke="#959cb0" stroke-width="1.1"/><circle cx="6" cy="3.4" r="0.65" fill="#959cb0"/></svg>
<div class="t " style="left:816.04px;top:564.82px;font-size:12px;line-height:12px;color:#3f72f0;transform:scaleX(0.8732);transform-origin:0 0;">1.09K</div>
<svg style="left:892.04px;top:563.78px" width="12" height="12" viewBox="0 0 12 12"><circle cx="6" cy="6" r="5.3" fill="none" stroke="#959cb0" stroke-width="1"/><path d="M6 5.2v3.6" stroke="#959cb0" stroke-width="1.1"/><circle cx="6" cy="3.4" r="0.65" fill="#959cb0"/></svg>
<div class="t " style="left:921.41px;top:564.82px;font-size:12px;line-height:12px;color:#3f72f0;transform:scaleX(0.8031);transform-origin:0 0;">1.18K</div>
<svg style="left:997.41px;top:563.78px" width="12" height="12" viewBox="0 0 12 12"><circle cx="6" cy="6" r="5.3" fill="none" stroke="#959cb0" stroke-width="1"/><path d="M6 5.2v3.6" stroke="#959cb0" stroke-width="1.1"/><circle cx="6" cy="3.4" r="0.65" fill="#959cb0"/></svg>
<div class="t " style="left:1026.78px;top:564.82px;font-size:12px;line-height:12px;color:#3f72f0;transform:scaleX(0.8732);transform-origin:0 0;">1.02K</div>
<svg style="left:1102.78px;top:563.78px" width="12" height="12" viewBox="0 0 12 12"><circle cx="6" cy="6" r="5.3" fill="none" stroke="#959cb0" stroke-width="1"/><path d="M6 5.2v3.6" stroke="#959cb0" stroke-width="1.1"/><circle cx="6" cy="3.4" r="0.65" fill="#959cb0"/></svg>
<div class="t " style="left:1132.15px;top:564.82px;font-size:12px;line-height:12px;color:#3f72f0;transform:scaleX(0.7543);transform-origin:0 0;">1.1K</div>
<svg style="left:1208.15px;top:563.78px" width="12" height="12" viewBox="0 0 12 12"><circle cx="6" cy="6" r="5.3" fill="none" stroke="#959cb0" stroke-width="1"/><path d="M6 5.2v3.6" stroke="#959cb0" stroke-width="1.1"/><circle cx="6" cy="3.4" r="0.65" fill="#959cb0"/></svg>
<div class="t " style="left:1237.52px;top:564.82px;font-size:12px;line-height:12px;color:#3f72f0;transform:scaleX(0.8732);transform-origin:0 0;">1.06K</div>
<svg style="left:1313.52px;top:563.78px" width="12" height="12" viewBox="0 0 12 12"><circle cx="6" cy="6" r="5.3" fill="none" stroke="#959cb0" stroke-width="1"/><path d="M6 5.2v3.6" stroke="#959cb0" stroke-width="1.1"/><circle cx="6" cy="3.4" r="0.65" fill="#959cb0"/></svg>
<div class="t " style="left:1342.89px;top:564.82px;font-size:12px;line-height:12px;color:#3f72f0;transform:scaleX(0.8732);transform-origin:0 0;">1.05K</div>
<svg style="left:1418.89px;top:563.78px" width="12" height="12" viewBox="0 0 12 12"><circle cx="6" cy="6" r="5.3" fill="none" stroke="#959cb0" stroke-width="1"/><path d="M6 5.2v3.6" stroke="#959cb0" stroke-width="1.1"/><circle cx="6" cy="3.4" r="0.65" fill="#959cb0"/></svg>
<div class="t " style="left:1448.26px;top:564.82px;font-size:12px;line-height:12px;color:#3f72f0;letter-spacing:-0.120px;">939</div>
<svg style="left:1524.26px;top:563.78px" width="12" height="12" viewBox="0 0 12 12"><circle cx="6" cy="6" r="5.3" fill="none" stroke="#959cb0" stroke-width="1"/><path d="M6 5.2v3.6" stroke="#959cb0" stroke-width="1.1"/><circle cx="6" cy="3.4" r="0.65" fill="#959cb0"/></svg>
<div class="t " style="left:1553.63px;top:564.82px;font-size:12px;line-height:12px;color:#3f72f0;letter-spacing:-0.120px;">954</div>
<svg style="left:1629.63px;top:563.78px" width="12" height="12" viewBox="0 0 12 12"><circle cx="6" cy="6" r="5.3" fill="none" stroke="#959cb0" stroke-width="1"/><path d="M6 5.2v3.6" stroke="#959cb0" stroke-width="1.1"/><circle cx="6" cy="3.4" r="0.65" fill="#959cb0"/></svg>
<div class="t " style="left:1659.00px;top:564.82px;font-size:12px;line-height:12px;color:#3f72f0;transform:scaleX(0.7543);transform-origin:0 0;">1.1K</div>
<svg style="left:1735.00px;top:563.78px" width="12" height="12" viewBox="0 0 12 12"><circle cx="6" cy="6" r="5.3" fill="none" stroke="#959cb0" stroke-width="1"/><path d="M6 5.2v3.6" stroke="#959cb0" stroke-width="1.1"/><circle cx="6" cy="3.4" r="0.65" fill="#959cb0"/></svg>
<div class="t " style="left:1764.37px;top:564.82px;font-size:12px;line-height:12px;color:#3f72f0;letter-spacing:-0.120px;">883</div>
<svg style="left:1840.37px;top:563.78px" width="12" height="12" viewBox="0 0 12 12"><circle cx="6" cy="6" r="5.3" fill="none" stroke="#959cb0" stroke-width="1"/><path d="M6 5.2v3.6" stroke="#959cb0" stroke-width="1.1"/><circle cx="6" cy="3.4" r="0.65" fill="#959cb0"/></svg>
<div class="r" style="left:501.00px;top:583.56px;width:1360.70px;height:1.00px;background:#dfe0e4;"></div>
<div class="r" style="left:501.00px;top:584.56px;width:96.30px;height:29.78px;background:#f4f2fd;"></div>
<div class="r" style="left:597.30px;top:584.56px;width:1264.40px;height:29.78px;background:#f4f2fd;"></div>
<div class="t " style="left:513.00px;top:594.58px;font-size:12.5px;line-height:12.5px;color:#2b2f4d;transform:scaleX(0.9408);transform-origin:0 0;">Forecast (OC)</div>
<div class="t " style="left:605.30px;top:594.60px;font-size:12px;line-height:12px;color:#3f72f0;transform:scaleX(0.8031);transform-origin:0 0;">1.13K</div>
<div class="t " style="left:710.67px;top:594.60px;font-size:12px;line-height:12px;color:#3f72f0;transform:scaleX(0.9433);transform-origin:0 0;">2.02K</div>
<div class="t " style="left:816.04px;top:594.60px;font-size:12px;line-height:12px;color:#3f72f0;transform:scaleX(0.8732);transform-origin:0 0;">1.55K</div>
<div class="t " style="left:921.41px;top:594.60px;font-size:12px;line-height:12px;color:#3f72f0;transform:scaleX(0.8732);transform-origin:0 0;">1.74K</div>
<div class="t " style="left:1026.78px;top:594.60px;font-size:12px;line-height:12px;color:#3f72f0;transform:scaleX(0.8435);transform-origin:0 0;">1.5K</div>
<div class="t " style="left:1132.15px;top:594.60px;font-size:12px;line-height:12px;color:#3f72f0;transform:scaleX(0.8732);transform-origin:0 0;">1.34K</div>
<div class="t " style="left:1237.52px;top:594.60px;font-size:12px;line-height:12px;color:#3f72f0;transform:scaleX(0.8732);transform-origin:0 0;">1.59K</div>
<div class="t " style="left:1342.89px;top:594.60px;font-size:12px;line-height:12px;color:#3f72f0;transform:scaleX(0.8732);transform-origin:0 0;">1.05K</div>
<div class="t " style="left:1448.26px;top:594.60px;font-size:12px;line-height:12px;color:#3f72f0;letter-spacing:-0.120px;">939</div>
<div class="t " style="left:1553.63px;top:594.60px;font-size:12px;line-height:12px;color:#3f72f0;letter-spacing:-0.120px;">954</div>
<div class="t " style="left:1659.00px;top:594.60px;font-size:12px;line-height:12px;color:#3f72f0;transform:scaleX(0.7543);transform-origin:0 0;">1.1K</div>
<div class="t " style="left:1764.37px;top:594.60px;font-size:12px;line-height:12px;color:#3f72f0;letter-spacing:-0.120px;">883</div>
<div class="r" style="left:501.00px;top:613.34px;width:1360.70px;height:1.00px;background:#dfe0e4;"></div>
<div class="r" style="left:501.00px;top:614.34px;width:96.30px;height:29.78px;background:#f4f2fd;"></div>
<div class="r" style="left:597.30px;top:614.34px;width:1264.40px;height:29.78px;background:#e1efe3;"></div>
<div class="t " style="left:513.00px;top:624.36px;font-size:12.5px;line-height:12.5px;color:#2b2f4d;letter-spacing:-0.025px;">Budget</div>
<div class="t " style="left:605.30px;top:624.43px;font-size:11px;line-height:11px;color:#3a9a4c;transform:scaleX(0.8859);transform-origin:0 0;">1.47K</div>
<svg style="left:681.30px;top:623.34px" width="12" height="12" viewBox="0 0 12 12"><circle cx="6" cy="6" r="5.3" fill="none" stroke="#959cb0" stroke-width="1"/><path d="M6 5.2v3.6" stroke="#959cb0" stroke-width="1.1"/><circle cx="6" cy="3.4" r="0.65" fill="#959cb0"/></svg>
<div class="t " style="left:710.67px;top:624.43px;font-size:11px;line-height:11px;color:#3a9a4c;transform:scaleX(0.9463);transform-origin:0 0;">2.4K</div>
<svg style="left:786.67px;top:623.34px" width="12" height="12" viewBox="0 0 12 12"><circle cx="6" cy="6" r="5.3" fill="none" stroke="#959cb0" stroke-width="1"/><path d="M6 5.2v3.6" stroke="#959cb0" stroke-width="1.1"/><circle cx="6" cy="3.4" r="0.65" fill="#959cb0"/></svg>
<div class="t " style="left:816.04px;top:624.43px;font-size:11px;line-height:11px;color:#3a9a4c;transform:scaleX(0.8859);transform-origin:0 0;">1.57K</div>
<svg style="left:892.04px;top:623.34px" width="12" height="12" viewBox="0 0 12 12"><circle cx="6" cy="6" r="5.3" fill="none" stroke="#959cb0" stroke-width="1"/><path d="M6 5.2v3.6" stroke="#959cb0" stroke-width="1.1"/><circle cx="6" cy="3.4" r="0.65" fill="#959cb0"/></svg>
<div class="t " style="left:921.41px;top:624.43px;font-size:11px;line-height:11px;color:#3a9a4c;transform:scaleX(0.8147);transform-origin:0 0;">1.71K</div>
<svg style="left:997.41px;top:623.34px" width="12" height="12" viewBox="0 0 12 12"><circle cx="6" cy="6" r="5.3" fill="none" stroke="#959cb0" stroke-width="1"/><path d="M6 5.2v3.6" stroke="#959cb0" stroke-width="1.1"/><circle cx="6" cy="3.4" r="0.65" fill="#959cb0"/></svg>
<div class="t " style="left:1026.78px;top:624.43px;font-size:11px;line-height:11px;color:#3a9a4c;transform:scaleX(0.8859);transform-origin:0 0;">1.47K</div>
<svg style="left:1102.78px;top:623.34px" width="12" height="12" viewBox="0 0 12 12"><circle cx="6" cy="6" r="5.3" fill="none" stroke="#959cb0" stroke-width="1"/><path d="M6 5.2v3.6" stroke="#959cb0" stroke-width="1.1"/><circle cx="6" cy="3.4" r="0.65" fill="#959cb0"/></svg>
<div class="t " style="left:1132.15px;top:624.43px;font-size:11px;line-height:11px;color:#3a9a4c;transform:scaleX(0.8557);transform-origin:0 0;">1.6K</div>
<svg style="left:1208.15px;top:623.34px" width="12" height="12" viewBox="0 0 12 12"><circle cx="6" cy="6" r="5.3" fill="none" stroke="#959cb0" stroke-width="1"/><path d="M6 5.2v3.6" stroke="#959cb0" stroke-width="1.1"/><circle cx="6" cy="3.4" r="0.65" fill="#959cb0"/></svg>
<div class="t " style="left:1237.52px;top:624.43px;font-size:11px;line-height:11px;color:#3a9a4c;transform:scaleX(0.8859);transform-origin:0 0;">1.54K</div>
<svg style="left:1313.52px;top:623.34px" width="12" height="12" viewBox="0 0 12 12"><circle cx="6" cy="6" r="5.3" fill="none" stroke="#959cb0" stroke-width="1"/><path d="M6 5.2v3.6" stroke="#959cb0" stroke-width="1.1"/><circle cx="6" cy="3.4" r="0.65" fill="#959cb0"/></svg>
<div class="t " style="left:1342.89px;top:624.43px;font-size:11px;line-height:11px;color:#3a9a4c;transform:scaleX(0.8859);transform-origin:0 0;">1.52K</div>
<svg style="left:1418.89px;top:623.34px" width="12" height="12" viewBox="0 0 12 12"><circle cx="6" cy="6" r="5.3" fill="none" stroke="#959cb0" stroke-width="1"/><path d="M6 5.2v3.6" stroke="#959cb0" stroke-width="1.1"/><circle cx="6" cy="3.4" r="0.65" fill="#959cb0"/></svg>
<div class="t " style="left:1448.26px;top:624.43px;font-size:11px;line-height:11px;color:#3a9a4c;transform:scaleX(0.8859);transform-origin:0 0;">1.36K</div>
<svg style="left:1524.26px;top:623.34px" width="12" height="12" viewBox="0 0 12 12"><circle cx="6" cy="6" r="5.3" fill="none" stroke="#959cb0" stroke-width="1"/><path d="M6 5.2v3.6" stroke="#959cb0" stroke-width="1.1"/><circle cx="6" cy="3.4" r="0.65" fill="#959cb0"/></svg>
<div class="t " style="left:1553.63px;top:624.43px;font-size:11px;line-height:11px;color:#3a9a4c;transform:scaleX(0.8859);transform-origin:0 0;">1.38K</div>
<svg style="left:1629.63px;top:623.34px" width="12" height="12" viewBox="0 0 12 12"><circle cx="6" cy="6" r="5.3" fill="none" stroke="#959cb0" stroke-width="1"/><path d="M6 5.2v3.6" stroke="#959cb0" stroke-width="1.1"/><circle cx="6" cy="3.4" r="0.65" fill="#959cb0"/></svg>
<div class="t " style="left:1659.00px;top:624.43px;font-size:11px;line-height:11px;color:#3a9a4c;transform:scaleX(0.8859);transform-origin:0 0;">1.59K</div>
<svg style="left:1735.00px;top:623.34px" width="12" height="12" viewBox="0 0 12 12"><circle cx="6" cy="6" r="5.3" fill="none" stroke="#959cb0" stroke-width="1"/><path d="M6 5.2v3.6" stroke="#959cb0" stroke-width="1.1"/><circle cx="6" cy="3.4" r="0.65" fill="#959cb0"/></svg>
<div class="t " style="left:1764.37px;top:624.43px;font-size:11px;line-height:11px;color:#3a9a4c;transform:scaleX(0.8859);transform-origin:0 0;">1.28K</div>
<svg style="left:1840.37px;top:623.34px" width="12" height="12" viewBox="0 0 12 12"><circle cx="6" cy="6" r="5.3" fill="none" stroke="#959cb0" stroke-width="1"/><path d="M6 5.2v3.6" stroke="#959cb0" stroke-width="1.1"/><circle cx="6" cy="3.4" r="0.65" fill="#959cb0"/></svg>
<div class="r" style="left:501.00px;top:643.12px;width:1360.70px;height:1.00px;background:#dfe0e4;"></div>
<div class="r" style="left:501.00px;top:644.12px;width:96.30px;height:29.78px;background:#f4f2fd;"></div>
<div class="r" style="left:597.30px;top:644.12px;width:1264.40px;height:29.78px;background:#f4f2fd;"></div>
<div class="t " style="left:513.00px;top:654.14px;font-size:12.5px;line-height:12.5px;color:#2b2f4d;letter-spacing:-0.075px;">Open Orders</div>
<div class="t " style="left:605.30px;top:654.16px;font-size:12px;line-height:12px;color:#3f72f0;letter-spacing:-0.120px;">247</div>
<svg style="left:681.30px;top:653.12px" width="12" height="12" viewBox="0 0 12 12"><circle cx="6" cy="6" r="5.3" fill="none" stroke="#959cb0" stroke-width="1"/><path d="M6 5.2v3.6" stroke="#959cb0" stroke-width="1.1"/><circle cx="6" cy="3.4" r="0.65" fill="#959cb0"/></svg>
<div class="t " style="left:710.67px;top:654.16px;font-size:12px;line-height:12px;color:#3f72f0;transform:scaleX(0.8782);transform-origin:0 0;">751</div>
<svg style="left:786.67px;top:653.12px" width="12" height="12" viewBox="0 0 12 12"><circle cx="6" cy="6" r="5.3" fill="none" stroke="#959cb0" stroke-width="1"/><path d="M6 5.2v3.6" stroke="#959cb0" stroke-width="1.1"/><circle cx="6" cy="3.4" r="0.65" fill="#959cb0"/></svg>
<div class="t " style="left:816.04px;top:654.16px;font-size:12px;line-height:12px;color:#3f72f0;transform:scaleX(0.8782);transform-origin:0 0;">815</div>
<svg style="left:892.04px;top:653.12px" width="12" height="12" viewBox="0 0 12 12"><circle cx="6" cy="6" r="5.3" fill="none" stroke="#959cb0" stroke-width="1"/><path d="M6 5.2v3.6" stroke="#959cb0" stroke-width="1.1"/><circle cx="6" cy="3.4" r="0.65" fill="#959cb0"/></svg>
<div class="t " style="left:921.41px;top:654.16px;font-size:12px;line-height:12px;color:#3f72f0;letter-spacing:-0.120px;">998</div>
<svg style="left:997.41px;top:653.12px" width="12" height="12" viewBox="0 0 12 12"><circle cx="6" cy="6" r="5.3" fill="none" stroke="#959cb0" stroke-width="1"/><path d="M6 5.2v3.6" stroke="#959cb0" stroke-width="1.1"/><circle cx="6" cy="3.4" r="0.65" fill="#959cb0"/></svg>
<div class="t " style="left:1026.78px;top:654.16px;font-size:12px;line-height:12px;color:#3f72f0;transform:scaleX(0.8782);transform-origin:0 0;">681</div>
<svg style="left:1102.78px;top:653.12px" width="12" height="12" viewBox="0 0 12 12"><circle cx="6" cy="6" r="5.3" fill="none" stroke="#959cb0" stroke-width="1"/><path d="M6 5.2v3.6" stroke="#959cb0" stroke-width="1.1"/><circle cx="6" cy="3.4" r="0.65" fill="#959cb0"/></svg>
<div class="t " style="left:1132.15px;top:654.16px;font-size:12px;line-height:12px;color:#3f72f0;letter-spacing:-0.120px;">424</div>
<svg style="left:1208.15px;top:653.12px" width="12" height="12" viewBox="0 0 12 12"><circle cx="6" cy="6" r="5.3" fill="none" stroke="#959cb0" stroke-width="1"/><path d="M6 5.2v3.6" stroke="#959cb0" stroke-width="1.1"/><circle cx="6" cy="3.4" r="0.65" fill="#959cb0"/></svg>
<div class="t " style="left:1237.52px;top:654.16px;font-size:12px;line-height:12px;color:#3f72f0;letter-spacing:-0.120px;">999</div>
<svg style="left:1313.52px;top:653.12px" width="12" height="12" viewBox="0 0 12 12"><circle cx="6" cy="6" r="5.3" fill="none" stroke="#959cb0" stroke-width="1"/><path d="M6 5.2v3.6" stroke="#959cb0" stroke-width="1.1"/><circle cx="6" cy="3.4" r="0.65" fill="#959cb0"/></svg>
<div class="t " style="left:1342.89px;top:654.16px;font-size:12px;line-height:12px;color:#3f72f0;letter-spacing:-0.060px;">0</div>
<svg style="left:1418.89px;top:653.12px" width="12" height="12" viewBox="0 0 12 12"><circle cx="6" cy="6" r="5.3" fill="none" stroke="#959cb0" stroke-width="1"/><path d="M6 5.2v3.6" stroke="#959cb0" stroke-width="1.1"/><circle cx="6" cy="3.4" r="0.65" fill="#959cb0"/></svg>
<div class="t " style="left:1448.26px;top:654.16px;font-size:12px;line-height:12px;color:#3f72f0;letter-spacing:-0.060px;">0</div>
<svg style="left:1524.26px;top:653.12px" width="12" height="12" viewBox="0 0 12 12"><circle cx="6" cy="6" r="5.3" fill="none" stroke="#959cb0" stroke-width="1"/><path d="M6 5.2v3.6" stroke="#959cb0" stroke-width="1.1"/><circle cx="6" cy="3.4" r="0.65" fill="#959cb0"/></svg>
<div class="t " style="left:1553.63px;top:654.16px;font-size:12px;line-height:12px;color:#3f72f0;letter-spacing:-0.060px;">0</div>
<svg style="left:1629.63px;top:653.12px" width="12" height="12" viewBox="0 0 12 12"><circle cx="6" cy="6" r="5.3" fill="none" stroke="#959cb0" stroke-width="1"/><path d="M6 5.2v3.6" stroke="#959cb0" stroke-width="1.1"/><circle cx="6" cy="3.4" r="0.65" fill="#959cb0"/></svg>
<div class="t " style="left:1659.00px;top:654.16px;font-size:12px;line-height:12px;color:#3f72f0;letter-spacing:-0.060px;">0</div>
<svg style="left:1735.00px;top:653.12px" width="12" height="12" viewBox="0 0 12 12"><circle cx="6" cy="6" r="5.3" fill="none" stroke="#959cb0" stroke-width="1"/><path d="M6 5.2v3.6" stroke="#959cb0" stroke-width="1.1"/><circle cx="6" cy="3.4" r="0.65" fill="#959cb0"/></svg>
<div class="t " style="left:1764.37px;top:654.16px;font-size:12px;line-height:12px;color:#3f72f0;letter-spacing:-0.060px;">0</div>
<svg style="left:1840.37px;top:653.12px" width="12" height="12" viewBox="0 0 12 12"><circle cx="6" cy="6" r="5.3" fill="none" stroke="#959cb0" stroke-width="1"/><path d="M6 5.2v3.6" stroke="#959cb0" stroke-width="1.1"/><circle cx="6" cy="3.4" r="0.65" fill="#959cb0"/></svg>
<div class="r" style="left:501.00px;top:672.90px;width:1360.70px;height:1.00px;background:#dfe0e4;"></div>
<div class="r" style="left:501.00px;top:673.90px;width:96.30px;height:29.78px;background:#f4f2fd;"></div>
<div class="r" style="left:597.30px;top:673.90px;width:1264.40px;height:29.78px;background:#f4f2fd;"></div>
<div class="t " style="left:513.00px;top:683.92px;font-size:12.5px;line-height:12.5px;color:#2b2f4d;letter-spacing:0.118px;">Quotations</div>
<div class="t " style="left:605.30px;top:683.94px;font-size:12px;line-height:12px;color:#3f72f0;letter-spacing:-0.120px;">204</div>
<svg style="left:681.30px;top:682.90px" width="12" height="12" viewBox="0 0 12 12"><circle cx="6" cy="6" r="5.3" fill="none" stroke="#959cb0" stroke-width="1"/><path d="M6 5.2v3.6" stroke="#959cb0" stroke-width="1.1"/><circle cx="6" cy="3.4" r="0.65" fill="#959cb0"/></svg>
<div class="t " style="left:710.67px;top:683.94px;font-size:12px;line-height:12px;color:#3f72f0;transform:scaleX(0.8031);transform-origin:0 0;">1.17K</div>
<svg style="left:786.67px;top:682.90px" width="12" height="12" viewBox="0 0 12 12"><circle cx="6" cy="6" r="5.3" fill="none" stroke="#959cb0" stroke-width="1"/><path d="M6 5.2v3.6" stroke="#959cb0" stroke-width="1.1"/><circle cx="6" cy="3.4" r="0.65" fill="#959cb0"/></svg>
<div class="t " style="left:816.04px;top:683.94px;font-size:12px;line-height:12px;color:#3f72f0;transform:scaleX(0.8031);transform-origin:0 0;">1.12K</div>
<svg style="left:892.04px;top:682.90px" width="12" height="12" viewBox="0 0 12 12"><circle cx="6" cy="6" r="5.3" fill="none" stroke="#959cb0" stroke-width="1"/><path d="M6 5.2v3.6" stroke="#959cb0" stroke-width="1.1"/><circle cx="6" cy="3.4" r="0.65" fill="#959cb0"/></svg>
<div class="t " style="left:921.41px;top:683.94px;font-size:12px;line-height:12px;color:#3f72f0;transform:scaleX(0.8732);transform-origin:0 0;">1.32K</div>
<svg style="left:997.41px;top:682.90px" width="12" height="12" viewBox="0 0 12 12"><circle cx="6" cy="6" r="5.3" fill="none" stroke="#959cb0" stroke-width="1"/><path d="M6 5.2v3.6" stroke="#959cb0" stroke-width="1.1"/><circle cx="6" cy="3.4" r="0.65" fill="#959cb0"/></svg>
<div class="t " style="left:1026.78px;top:683.94px;font-size:12px;line-height:12px;color:#3f72f0;transform:scaleX(0.8031);transform-origin:0 0;">1.12K</div>
<svg style="left:1102.78px;top:682.90px" width="12" height="12" viewBox="0 0 12 12"><circle cx="6" cy="6" r="5.3" fill="none" stroke="#959cb0" stroke-width="1"/><path d="M6 5.2v3.6" stroke="#959cb0" stroke-width="1.1"/><circle cx="6" cy="3.4" r="0.65" fill="#959cb0"/></svg>
<div class="t " style="left:1132.15px;top:683.94px;font-size:12px;line-height:12px;color:#3f72f0;transform:scaleX(0.8732);transform-origin:0 0;">1.08K</div>
<svg style="left:1208.15px;top:682.90px" width="12" height="12" viewBox="0 0 12 12"><circle cx="6" cy="6" r="5.3" fill="none" stroke="#959cb0" stroke-width="1"/><path d="M6 5.2v3.6" stroke="#959cb0" stroke-width="1.1"/><circle cx="6" cy="3.4" r="0.65" fill="#959cb0"/></svg>
<div class="t " style="left:1237.52px;top:683.94px;font-size:12px;line-height:12px;color:#3f72f0;transform:scaleX(0.8031);transform-origin:0 0;">1.14K</div>
<svg style="left:1313.52px;top:682.90px" width="12" height="12" viewBox="0 0 12 12"><circle cx="6" cy="6" r="5.3" fill="none" stroke="#959cb0" stroke-width="1"/><path d="M6 5.2v3.6" stroke="#959cb0" stroke-width="1.1"/><circle cx="6" cy="3.4" r="0.65" fill="#959cb0"/></svg>
<div class="t " style="left:1342.89px;top:683.94px;font-size:12px;line-height:12px;color:#3f72f0;transform:scaleX(0.8031);transform-origin:0 0;">1.13K</div>
<svg style="left:1418.89px;top:682.90px" width="12" height="12" viewBox="0 0 12 12"><circle cx="6" cy="6" r="5.3" fill="none" stroke="#959cb0" stroke-width="1"/><path d="M6 5.2v3.6" stroke="#959cb0" stroke-width="1.1"/><circle cx="6" cy="3.4" r="0.65" fill="#959cb0"/></svg>
<div class="t " style="left:1448.26px;top:683.94px;font-size:12px;line-height:12px;color:#3f72f0;letter-spacing:-0.120px;">580</div>
<svg style="left:1524.26px;top:682.90px" width="12" height="12" viewBox="0 0 12 12"><circle cx="6" cy="6" r="5.3" fill="none" stroke="#959cb0" stroke-width="1"/><path d="M6 5.2v3.6" stroke="#959cb0" stroke-width="1.1"/><circle cx="6" cy="3.4" r="0.65" fill="#959cb0"/></svg>
<div class="t " style="left:1553.63px;top:683.94px;font-size:12px;line-height:12px;color:#3f72f0;letter-spacing:-0.120px;">547</div>
<svg style="left:1629.63px;top:682.90px" width="12" height="12" viewBox="0 0 12 12"><circle cx="6" cy="6" r="5.3" fill="none" stroke="#959cb0" stroke-width="1"/><path d="M6 5.2v3.6" stroke="#959cb0" stroke-width="1.1"/><circle cx="6" cy="3.4" r="0.65" fill="#959cb0"/></svg>
<div class="t " style="left:1659.00px;top:683.94px;font-size:12px;line-height:12px;color:#3f72f0;letter-spacing:-0.120px;">562</div>
<svg style="left:1735.00px;top:682.90px" width="12" height="12" viewBox="0 0 12 12"><circle cx="6" cy="6" r="5.3" fill="none" stroke="#959cb0" stroke-width="1"/><path d="M6 5.2v3.6" stroke="#959cb0" stroke-width="1.1"/><circle cx="6" cy="3.4" r="0.65" fill="#959cb0"/></svg>
<div class="t " style="left:1764.37px;top:683.94px;font-size:12px;line-height:12px;color:#3f72f0;letter-spacing:-0.120px;">579</div>
<svg style="left:1840.37px;top:682.90px" width="12" height="12" viewBox="0 0 12 12"><circle cx="6" cy="6" r="5.3" fill="none" stroke="#959cb0" stroke-width="1"/><path d="M6 5.2v3.6" stroke="#959cb0" stroke-width="1.1"/><circle cx="6" cy="3.4" r="0.65" fill="#959cb0"/></svg>
<div class="r" style="left:501.00px;top:702.68px;width:1360.70px;height:1.00px;background:#dfe0e4;"></div>
<div class="r" style="left:501.00px;top:703.68px;width:96.30px;height:29.78px;background:#f4f2fd;"></div>
<div class="r" style="left:597.30px;top:703.68px;width:1264.40px;height:29.78px;background:#f4f2fd;"></div>
<div class="t " style="left:513.00px;top:713.70px;font-size:12.5px;line-height:12.5px;color:#2b2f4d;transform:scaleX(0.9010);transform-origin:0 0;">Sales Inputs</div>
<div class="t " style="left:605.30px;top:713.77px;font-size:11px;line-height:11px;color:#3f72f0;transform:scaleX(0.8147);transform-origin:0 0;">1.13K</div>
<svg style="left:681.30px;top:712.68px" width="12" height="12" viewBox="0 0 12 12"><circle cx="6" cy="6" r="5.3" fill="none" stroke="#959cb0" stroke-width="1"/><path d="M6 5.2v3.6" stroke="#959cb0" stroke-width="1.1"/><circle cx="6" cy="3.4" r="0.65" fill="#959cb0"/></svg>
<div class="t " style="left:710.67px;top:713.77px;font-size:11px;line-height:11px;color:#3f72f0;transform:scaleX(0.9570);transform-origin:0 0;">2.02K</div>
<svg style="left:786.67px;top:712.68px" width="12" height="12" viewBox="0 0 12 12"><circle cx="6" cy="6" r="5.3" fill="none" stroke="#959cb0" stroke-width="1"/><path d="M6 5.2v3.6" stroke="#959cb0" stroke-width="1.1"/><circle cx="6" cy="3.4" r="0.65" fill="#959cb0"/></svg>
<div class="t " style="left:816.04px;top:713.77px;font-size:11px;line-height:11px;color:#3f72f0;transform:scaleX(0.8859);transform-origin:0 0;">1.55K</div>
<svg style="left:892.04px;top:712.68px" width="12" height="12" viewBox="0 0 12 12"><circle cx="6" cy="6" r="5.3" fill="none" stroke="#959cb0" stroke-width="1"/><path d="M6 5.2v3.6" stroke="#959cb0" stroke-width="1.1"/><circle cx="6" cy="3.4" r="0.65" fill="#959cb0"/></svg>
<div class="t " style="left:921.41px;top:713.77px;font-size:11px;line-height:11px;color:#3f72f0;transform:scaleX(0.8859);transform-origin:0 0;">1.74K</div>
<svg style="left:997.41px;top:712.68px" width="12" height="12" viewBox="0 0 12 12"><circle cx="6" cy="6" r="5.3" fill="none" stroke="#959cb0" stroke-width="1"/><path d="M6 5.2v3.6" stroke="#959cb0" stroke-width="1.1"/><circle cx="6" cy="3.4" r="0.65" fill="#959cb0"/></svg>
<div class="t " style="left:1026.78px;top:713.77px;font-size:11px;line-height:11px;color:#3f72f0;transform:scaleX(0.8557);transform-origin:0 0;">1.5K</div>
<svg style="left:1102.78px;top:712.68px" width="12" height="12" viewBox="0 0 12 12"><circle cx="6" cy="6" r="5.3" fill="none" stroke="#959cb0" stroke-width="1"/><path d="M6 5.2v3.6" stroke="#959cb0" stroke-width="1.1"/><circle cx="6" cy="3.4" r="0.65" fill="#959cb0"/></svg>
<div class="t " style="left:1132.15px;top:713.77px;font-size:11px;line-height:11px;color:#3f72f0;transform:scaleX(0.8859);transform-origin:0 0;">1.34K</div>
<svg style="left:1208.15px;top:712.68px" width="12" height="12" viewBox="0 0 12 12"><circle cx="6" cy="6" r="5.3" fill="none" stroke="#959cb0" stroke-width="1"/><path d="M6 5.2v3.6" stroke="#959cb0" stroke-width="1.1"/><circle cx="6" cy="3.4" r="0.65" fill="#959cb0"/></svg>
<div class="t " style="left:1237.52px;top:713.77px;font-size:11px;line-height:11px;color:#3f72f0;transform:scaleX(0.8859);transform-origin:0 0;">1.59K</div>
<svg style="left:1313.52px;top:712.68px" width="12" height="12" viewBox="0 0 12 12"><circle cx="6" cy="6" r="5.3" fill="none" stroke="#959cb0" stroke-width="1"/><path d="M6 5.2v3.6" stroke="#959cb0" stroke-width="1.1"/><circle cx="6" cy="3.4" r="0.65" fill="#959cb0"/></svg>
<div class="t " style="left:1342.89px;top:713.77px;font-size:11px;line-height:11px;color:#3f72f0;transform:scaleX(0.8859);transform-origin:0 0;">1.05K</div>
<svg style="left:1418.89px;top:712.68px" width="12" height="12" viewBox="0 0 12 12"><circle cx="6" cy="6" r="5.3" fill="none" stroke="#959cb0" stroke-width="1"/><path d="M6 5.2v3.6" stroke="#959cb0" stroke-width="1.1"/><circle cx="6" cy="3.4" r="0.65" fill="#959cb0"/></svg>
<div class="t " style="left:1448.26px;top:713.77px;font-size:11px;line-height:11px;color:#3f72f0;letter-spacing:0.022px;">939</div>
<svg style="left:1524.26px;top:712.68px" width="12" height="12" viewBox="0 0 12 12"><circle cx="6" cy="6" r="5.3" fill="none" stroke="#959cb0" stroke-width="1"/><path d="M6 5.2v3.6" stroke="#959cb0" stroke-width="1.1"/><circle cx="6" cy="3.4" r="0.65" fill="#959cb0"/></svg>
<div class="t " style="left:1553.63px;top:713.77px;font-size:11px;line-height:11px;color:#3f72f0;letter-spacing:0.022px;">954</div>
<svg style="left:1629.63px;top:712.68px" width="12" height="12" viewBox="0 0 12 12"><circle cx="6" cy="6" r="5.3" fill="none" stroke="#959cb0" stroke-width="1"/><path d="M6 5.2v3.6" stroke="#959cb0" stroke-width="1.1"/><circle cx="6" cy="3.4" r="0.65" fill="#959cb0"/></svg>
<div class="t " style="left:1659.00px;top:713.77px;font-size:11px;line-height:11px;color:#3f72f0;transform:scaleX(0.7652);transform-origin:0 0;">1.1K</div>
<svg style="left:1735.00px;top:712.68px" width="12" height="12" viewBox="0 0 12 12"><circle cx="6" cy="6" r="5.3" fill="none" stroke="#959cb0" stroke-width="1"/><path d="M6 5.2v3.6" stroke="#959cb0" stroke-width="1.1"/><circle cx="6" cy="3.4" r="0.65" fill="#959cb0"/></svg>
<div class="t " style="left:1764.37px;top:713.77px;font-size:11px;line-height:11px;color:#3f72f0;letter-spacing:0.022px;">883</div>
<svg style="left:1840.37px;top:712.68px" width="12" height="12" viewBox="0 0 12 12"><circle cx="6" cy="6" r="5.3" fill="none" stroke="#959cb0" stroke-width="1"/><path d="M6 5.2v3.6" stroke="#959cb0" stroke-width="1.1"/><circle cx="6" cy="3.4" r="0.65" fill="#959cb0"/></svg>
<div class="r" style="left:501.00px;top:732.46px;width:1360.70px;height:1.00px;background:#dfe0e4;"></div>
<div class="r" style="left:501.00px;top:733.46px;width:96.30px;height:29.78px;background:#f4f2fd;"></div>
<div class="r" style="left:597.30px;top:733.46px;width:1264.40px;height:29.78px;background:#f4f2fd;"></div>
<div class="t " style="left:513.00px;top:743.48px;font-size:12.5px;line-height:12.5px;color:#2b2f4d;letter-spacing:-0.118px;">1 year ago</div>
<div class="t " style="left:605.30px;top:743.50px;font-size:12px;line-height:12px;color:#3f72f0;transform:scaleX(0.8732);transform-origin:0 0;">1.08K</div>
<svg style="left:681.30px;top:742.46px" width="12" height="12" viewBox="0 0 12 12"><circle cx="6" cy="6" r="5.3" fill="none" stroke="#959cb0" stroke-width="1"/><path d="M6 5.2v3.6" stroke="#959cb0" stroke-width="1.1"/><circle cx="6" cy="3.4" r="0.65" fill="#959cb0"/></svg>
<div class="t " style="left:710.67px;top:743.50px;font-size:12px;line-height:12px;color:#3f72f0;transform:scaleX(0.8732);transform-origin:0 0;">1.36K</div>
<svg style="left:786.67px;top:742.46px" width="12" height="12" viewBox="0 0 12 12"><circle cx="6" cy="6" r="5.3" fill="none" stroke="#959cb0" stroke-width="1"/><path d="M6 5.2v3.6" stroke="#959cb0" stroke-width="1.1"/><circle cx="6" cy="3.4" r="0.65" fill="#959cb0"/></svg>
<div class="t " style="left:816.04px;top:743.50px;font-size:12px;line-height:12px;color:#3f72f0;transform:scaleX(0.8732);transform-origin:0 0;">1.24K</div>
<svg style="left:892.04px;top:742.46px" width="12" height="12" viewBox="0 0 12 12"><circle cx="6" cy="6" r="5.3" fill="none" stroke="#959cb0" stroke-width="1"/><path d="M6 5.2v3.6" stroke="#959cb0" stroke-width="1.1"/><circle cx="6" cy="3.4" r="0.65" fill="#959cb0"/></svg>
<div class="t " style="left:921.41px;top:743.50px;font-size:12px;line-height:12px;color:#3f72f0;transform:scaleX(0.8782);transform-origin:0 0;">871</div>
<svg style="left:997.41px;top:742.46px" width="12" height="12" viewBox="0 0 12 12"><circle cx="6" cy="6" r="5.3" fill="none" stroke="#959cb0" stroke-width="1"/><path d="M6 5.2v3.6" stroke="#959cb0" stroke-width="1.1"/><circle cx="6" cy="3.4" r="0.65" fill="#959cb0"/></svg>
<div class="t " style="left:1026.78px;top:743.50px;font-size:12px;line-height:12px;color:#3f72f0;transform:scaleX(0.8732);transform-origin:0 0;">1.74K</div>
<svg style="left:1102.78px;top:742.46px" width="12" height="12" viewBox="0 0 12 12"><circle cx="6" cy="6" r="5.3" fill="none" stroke="#959cb0" stroke-width="1"/><path d="M6 5.2v3.6" stroke="#959cb0" stroke-width="1.1"/><circle cx="6" cy="3.4" r="0.65" fill="#959cb0"/></svg>
<div class="t " style="left:1132.15px;top:743.50px;font-size:12px;line-height:12px;color:#3f72f0;transform:scaleX(0.8435);transform-origin:0 0;">1.4K</div>
<svg style="left:1208.15px;top:742.46px" width="12" height="12" viewBox="0 0 12 12"><circle cx="6" cy="6" r="5.3" fill="none" stroke="#959cb0" stroke-width="1"/><path d="M6 5.2v3.6" stroke="#959cb0" stroke-width="1.1"/><circle cx="6" cy="3.4" r="0.65" fill="#959cb0"/></svg>
<div class="t " style="left:1237.52px;top:743.50px;font-size:12px;line-height:12px;color:#3f72f0;transform:scaleX(0.8732);transform-origin:0 0;">1.29K</div>
<svg style="left:1313.52px;top:742.46px" width="12" height="12" viewBox="0 0 12 12"><circle cx="6" cy="6" r="5.3" fill="none" stroke="#959cb0" stroke-width="1"/><path d="M6 5.2v3.6" stroke="#959cb0" stroke-width="1.1"/><circle cx="6" cy="3.4" r="0.65" fill="#959cb0"/></svg>
<div class="t " style="left:1342.89px;top:743.50px;font-size:12px;line-height:12px;color:#3f72f0;transform:scaleX(0.8031);transform-origin:0 0;">1.01K</div>
<svg style="left:1418.89px;top:742.46px" width="12" height="12" viewBox="0 0 12 12"><circle cx="6" cy="6" r="5.3" fill="none" stroke="#959cb0" stroke-width="1"/><path d="M6 5.2v3.6" stroke="#959cb0" stroke-width="1.1"/><circle cx="6" cy="3.4" r="0.65" fill="#959cb0"/></svg>
<div class="t " style="left:1448.26px;top:743.50px;font-size:12px;line-height:12px;color:#3f72f0;transform:scaleX(0.8732);transform-origin:0 0;">1.23K</div>
<svg style="left:1524.26px;top:742.46px" width="12" height="12" viewBox="0 0 12 12"><circle cx="6" cy="6" r="5.3" fill="none" stroke="#959cb0" stroke-width="1"/><path d="M6 5.2v3.6" stroke="#959cb0" stroke-width="1.1"/><circle cx="6" cy="3.4" r="0.65" fill="#959cb0"/></svg>
<div class="t " style="left:1553.63px;top:743.50px;font-size:12px;line-height:12px;color:#3f72f0;transform:scaleX(0.8031);transform-origin:0 0;">1.19K</div>
<svg style="left:1629.63px;top:742.46px" width="12" height="12" viewBox="0 0 12 12"><circle cx="6" cy="6" r="5.3" fill="none" stroke="#959cb0" stroke-width="1"/><path d="M6 5.2v3.6" stroke="#959cb0" stroke-width="1.1"/><circle cx="6" cy="3.4" r="0.65" fill="#959cb0"/></svg>
<div class="t " style="left:1659.00px;top:743.50px;font-size:12px;line-height:12px;color:#3f72f0;letter-spacing:-0.120px;">904</div>
<svg style="left:1735.00px;top:742.46px" width="12" height="12" viewBox="0 0 12 12"><circle cx="6" cy="6" r="5.3" fill="none" stroke="#959cb0" stroke-width="1"/><path d="M6 5.2v3.6" stroke="#959cb0" stroke-width="1.1"/><circle cx="6" cy="3.4" r="0.65" fill="#959cb0"/></svg>
<div class="t " style="left:1764.37px;top:743.50px;font-size:12px;line-height:12px;color:#3f72f0;letter-spacing:-0.120px;">690</div>
<svg style="left:1840.37px;top:742.46px" width="12" height="12" viewBox="0 0 12 12"><circle cx="6" cy="6" r="5.3" fill="none" stroke="#959cb0" stroke-width="1"/><path d="M6 5.2v3.6" stroke="#959cb0" stroke-width="1.1"/><circle cx="6" cy="3.4" r="0.65" fill="#959cb0"/></svg>
<div class="r" style="left:501.00px;top:762.24px;width:1360.70px;height:1.00px;background:#dfe0e4;"></div>
<div class="r" style="left:501.00px;top:763.24px;width:96.30px;height:29.78px;background:#f4f2fd;"></div>
<div class="r" style="left:597.30px;top:763.24px;width:1264.40px;height:29.78px;background:#f4f2fd;"></div>
<div class="t " style="left:513.00px;top:773.26px;font-size:12.5px;line-height:12.5px;color:#2b2f4d;letter-spacing:-0.118px;">2 year ago</div>
<div class="t " style="left:605.30px;top:773.28px;font-size:12px;line-height:12px;color:#3f72f0;letter-spacing:-0.120px;">838</div>
<svg style="left:681.30px;top:772.24px" width="12" height="12" viewBox="0 0 12 12"><circle cx="6" cy="6" r="5.3" fill="none" stroke="#959cb0" stroke-width="1"/><path d="M6 5.2v3.6" stroke="#959cb0" stroke-width="1.1"/><circle cx="6" cy="3.4" r="0.65" fill="#959cb0"/></svg>
<div class="t " style="left:710.67px;top:773.28px;font-size:12px;line-height:12px;color:#3f72f0;transform:scaleX(0.8435);transform-origin:0 0;">1.4K</div>
<svg style="left:786.67px;top:772.24px" width="12" height="12" viewBox="0 0 12 12"><circle cx="6" cy="6" r="5.3" fill="none" stroke="#959cb0" stroke-width="1"/><path d="M6 5.2v3.6" stroke="#959cb0" stroke-width="1.1"/><circle cx="6" cy="3.4" r="0.65" fill="#959cb0"/></svg>
<div class="t " style="left:816.04px;top:773.28px;font-size:12px;line-height:12px;color:#3f72f0;letter-spacing:-0.120px;">837</div>
<svg style="left:892.04px;top:772.24px" width="12" height="12" viewBox="0 0 12 12"><circle cx="6" cy="6" r="5.3" fill="none" stroke="#959cb0" stroke-width="1"/><path d="M6 5.2v3.6" stroke="#959cb0" stroke-width="1.1"/><circle cx="6" cy="3.4" r="0.65" fill="#959cb0"/></svg>
<div class="t " style="left:921.41px;top:773.28px;font-size:12px;line-height:12px;color:#3f72f0;letter-spacing:-0.120px;">820</div>
<svg style="left:997.41px;top:772.24px" width="12" height="12" viewBox="0 0 12 12"><circle cx="6" cy="6" r="5.3" fill="none" stroke="#959cb0" stroke-width="1"/><path d="M6 5.2v3.6" stroke="#959cb0" stroke-width="1.1"/><circle cx="6" cy="3.4" r="0.65" fill="#959cb0"/></svg>
<div class="t " style="left:1026.78px;top:773.28px;font-size:12px;line-height:12px;color:#3f72f0;letter-spacing:-0.120px;">988</div>
<svg style="left:1102.78px;top:772.24px" width="12" height="12" viewBox="0 0 12 12"><circle cx="6" cy="6" r="5.3" fill="none" stroke="#959cb0" stroke-width="1"/><path d="M6 5.2v3.6" stroke="#959cb0" stroke-width="1.1"/><circle cx="6" cy="3.4" r="0.65" fill="#959cb0"/></svg>
<div class="t " style="left:1132.15px;top:773.28px;font-size:12px;line-height:12px;color:#3f72f0;transform:scaleX(0.8732);transform-origin:0 0;">1.27K</div>
<svg style="left:1208.15px;top:772.24px" width="12" height="12" viewBox="0 0 12 12"><circle cx="6" cy="6" r="5.3" fill="none" stroke="#959cb0" stroke-width="1"/><path d="M6 5.2v3.6" stroke="#959cb0" stroke-width="1.1"/><circle cx="6" cy="3.4" r="0.65" fill="#959cb0"/></svg>
<div class="t " style="left:1237.52px;top:773.28px;font-size:12px;line-height:12px;color:#3f72f0;letter-spacing:-0.120px;">793</div>
<svg style="left:1313.52px;top:772.24px" width="12" height="12" viewBox="0 0 12 12"><circle cx="6" cy="6" r="5.3" fill="none" stroke="#959cb0" stroke-width="1"/><path d="M6 5.2v3.6" stroke="#959cb0" stroke-width="1.1"/><circle cx="6" cy="3.4" r="0.65" fill="#959cb0"/></svg>
<div class="t " style="left:1342.89px;top:773.28px;font-size:12px;line-height:12px;color:#3f72f0;letter-spacing:-0.120px;">945</div>
<svg style="left:1418.89px;top:772.24px" width="12" height="12" viewBox="0 0 12 12"><circle cx="6" cy="6" r="5.3" fill="none" stroke="#959cb0" stroke-width="1"/><path d="M6 5.2v3.6" stroke="#959cb0" stroke-width="1.1"/><circle cx="6" cy="3.4" r="0.65" fill="#959cb0"/></svg>
<div class="t " style="left:1448.26px;top:773.28px;font-size:12px;line-height:12px;color:#3f72f0;letter-spacing:-0.120px;">782</div>
<svg style="left:1524.26px;top:772.24px" width="12" height="12" viewBox="0 0 12 12"><circle cx="6" cy="6" r="5.3" fill="none" stroke="#959cb0" stroke-width="1"/><path d="M6 5.2v3.6" stroke="#959cb0" stroke-width="1.1"/><circle cx="6" cy="3.4" r="0.65" fill="#959cb0"/></svg>
<div class="t " style="left:1553.63px;top:773.28px;font-size:12px;line-height:12px;color:#3f72f0;letter-spacing:-0.120px;">960</div>
<svg style="left:1629.63px;top:772.24px" width="12" height="12" viewBox="0 0 12 12"><circle cx="6" cy="6" r="5.3" fill="none" stroke="#959cb0" stroke-width="1"/><path d="M6 5.2v3.6" stroke="#959cb0" stroke-width="1.1"/><circle cx="6" cy="3.4" r="0.65" fill="#959cb0"/></svg>
<div class="t " style="left:1659.00px;top:773.28px;font-size:12px;line-height:12px;color:#3f72f0;transform:scaleX(0.8435);transform-origin:0 0;">1.2K</div>
<svg style="left:1735.00px;top:772.24px" width="12" height="12" viewBox="0 0 12 12"><circle cx="6" cy="6" r="5.3" fill="none" stroke="#959cb0" stroke-width="1"/><path d="M6 5.2v3.6" stroke="#959cb0" stroke-width="1.1"/><circle cx="6" cy="3.4" r="0.65" fill="#959cb0"/></svg>
<div class="t " style="left:1764.37px;top:773.28px;font-size:12px;line-height:12px;color:#3f72f0;transform:scaleX(0.8782);transform-origin:0 0;">901</div>
<svg style="left:1840.37px;top:772.24px" width="12" height="12" viewBox="0 0 12 12"><circle cx="6" cy="6" r="5.3" fill="none" stroke="#959cb0" stroke-width="1"/><path d="M6 5.2v3.6" stroke="#959cb0" stroke-width="1.1"/><circle cx="6" cy="3.4" r="0.65" fill="#959cb0"/></svg>
<div class="r" style="left:501.00px;top:792.02px;width:1360.70px;height:1.00px;background:#dfe0e4;"></div>
<div class="r" style="left:501.00px;top:793.02px;width:96.30px;height:29.78px;background:#f4f2fd;"></div>
<div class="r" style="left:597.30px;top:793.02px;width:1264.40px;height:29.78px;background:#f4f2fd;"></div>
<div class="t " style="left:513.00px;top:803.04px;font-size:12.5px;line-height:12.5px;color:#2b2f4d;transform:scaleX(0.9481);transform-origin:0 0;">Forecast 1</div>
<div class="t " style="left:605.30px;top:803.11px;font-size:11px;line-height:11px;color:#3f72f0;transform:scaleX(0.8147);transform-origin:0 0;">1.13K</div>
<svg style="left:681.30px;top:802.02px" width="12" height="12" viewBox="0 0 12 12"><circle cx="6" cy="6" r="5.3" fill="none" stroke="#959cb0" stroke-width="1"/><path d="M6 5.2v3.6" stroke="#959cb0" stroke-width="1.1"/><circle cx="6" cy="3.4" r="0.65" fill="#959cb0"/></svg>
<div class="t " style="left:710.67px;top:803.11px;font-size:11px;line-height:11px;color:#3f72f0;transform:scaleX(0.9570);transform-origin:0 0;">2.02K</div>
<svg style="left:786.67px;top:802.02px" width="12" height="12" viewBox="0 0 12 12"><circle cx="6" cy="6" r="5.3" fill="none" stroke="#959cb0" stroke-width="1"/><path d="M6 5.2v3.6" stroke="#959cb0" stroke-width="1.1"/><circle cx="6" cy="3.4" r="0.65" fill="#959cb0"/></svg>
<div class="t " style="left:816.04px;top:803.11px;font-size:11px;line-height:11px;color:#3f72f0;transform:scaleX(0.8859);transform-origin:0 0;">1.55K</div>
<svg style="left:892.04px;top:802.02px" width="12" height="12" viewBox="0 0 12 12"><circle cx="6" cy="6" r="5.3" fill="none" stroke="#959cb0" stroke-width="1"/><path d="M6 5.2v3.6" stroke="#959cb0" stroke-width="1.1"/><circle cx="6" cy="3.4" r="0.65" fill="#959cb0"/></svg>
<div class="t " style="left:921.41px;top:803.11px;font-size:11px;line-height:11px;color:#3f72f0;transform:scaleX(0.8859);transform-origin:0 0;">1.74K</div>
<svg style="left:997.41px;top:802.02px" width="12" height="12" viewBox="0 0 12 12"><circle cx="6" cy="6" r="5.3" fill="none" stroke="#959cb0" stroke-width="1"/><path d="M6 5.2v3.6" stroke="#959cb0" stroke-width="1.1"/><circle cx="6" cy="3.4" r="0.65" fill="#959cb0"/></svg>
<div class="t " style="left:1026.78px;top:803.11px;font-size:11px;line-height:11px;color:#3f72f0;transform:scaleX(0.8557);transform-origin:0 0;">1.5K</div>
<svg style="left:1102.78px;top:802.02px" width="12" height="12" viewBox="0 0 12 12"><circle cx="6" cy="6" r="5.3" fill="none" stroke="#959cb0" stroke-width="1"/><path d="M6 5.2v3.6" stroke="#959cb0" stroke-width="1.1"/><circle cx="6" cy="3.4" r="0.65" fill="#959cb0"/></svg>
<div class="t " style="left:1132.15px;top:803.11px;font-size:11px;line-height:11px;color:#3f72f0;transform:scaleX(0.8859);transform-origin:0 0;">1.34K</div>
<svg style="left:1208.15px;top:802.02px" width="12" height="12" viewBox="0 0 12 12"><circle cx="6" cy="6" r="5.3" fill="none" stroke="#959cb0" stroke-width="1"/><path d="M6 5.2v3.6" stroke="#959cb0" stroke-width="1.1"/><circle cx="6" cy="3.4" r="0.65" fill="#959cb0"/></svg>
<div class="t " style="left:1237.52px;top:803.11px;font-size:11px;line-height:11px;color:#3f72f0;transform:scaleX(0.8859);transform-origin:0 0;">1.59K</div>
<svg style="left:1313.52px;top:802.02px" width="12" height="12" viewBox="0 0 12 12"><circle cx="6" cy="6" r="5.3" fill="none" stroke="#959cb0" stroke-width="1"/><path d="M6 5.2v3.6" stroke="#959cb0" stroke-width="1.1"/><circle cx="6" cy="3.4" r="0.65" fill="#959cb0"/></svg>
<div class="t " style="left:1342.89px;top:803.11px;font-size:11px;line-height:11px;color:#3f72f0;transform:scaleX(0.8859);transform-origin:0 0;">1.05K</div>
<svg style="left:1418.89px;top:802.02px" width="12" height="12" viewBox="0 0 12 12"><circle cx="6" cy="6" r="5.3" fill="none" stroke="#959cb0" stroke-width="1"/><path d="M6 5.2v3.6" stroke="#959cb0" stroke-width="1.1"/><circle cx="6" cy="3.4" r="0.65" fill="#959cb0"/></svg>
<div class="t " style="left:1448.26px;top:803.11px;font-size:11px;line-height:11px;color:#3f72f0;letter-spacing:0.022px;">939</div>
<svg style="left:1524.26px;top:802.02px" width="12" height="12" viewBox="0 0 12 12"><circle cx="6" cy="6" r="5.3" fill="none" stroke="#959cb0" stroke-width="1"/><path d="M6 5.2v3.6" stroke="#959cb0" stroke-width="1.1"/><circle cx="6" cy="3.4" r="0.65" fill="#959cb0"/></svg>
<div class="t " style="left:1553.63px;top:803.11px;font-size:11px;line-height:11px;color:#3f72f0;letter-spacing:0.022px;">954</div>
<svg style="left:1629.63px;top:802.02px" width="12" height="12" viewBox="0 0 12 12"><circle cx="6" cy="6" r="5.3" fill="none" stroke="#959cb0" stroke-width="1"/><path d="M6 5.2v3.6" stroke="#959cb0" stroke-width="1.1"/><circle cx="6" cy="3.4" r="0.65" fill="#959cb0"/></svg>
<div class="t " style="left:1659.00px;top:803.11px;font-size:11px;line-height:11px;color:#3f72f0;transform:scaleX(0.7652);transform-origin:0 0;">1.1K</div>
<svg style="left:1735.00px;top:802.02px" width="12" height="12" viewBox="0 0 12 12"><circle cx="6" cy="6" r="5.3" fill="none" stroke="#959cb0" stroke-width="1"/><path d="M6 5.2v3.6" stroke="#959cb0" stroke-width="1.1"/><circle cx="6" cy="3.4" r="0.65" fill="#959cb0"/></svg>
<div class="t " style="left:1764.37px;top:803.11px;font-size:11px;line-height:11px;color:#3f72f0;letter-spacing:0.022px;">883</div>
<svg style="left:1840.37px;top:802.02px" width="12" height="12" viewBox="0 0 12 12"><circle cx="6" cy="6" r="5.3" fill="none" stroke="#959cb0" stroke-width="1"/><path d="M6 5.2v3.6" stroke="#959cb0" stroke-width="1.1"/><circle cx="6" cy="3.4" r="0.65" fill="#959cb0"/></svg>
<div class="r" style="left:501.00px;top:821.80px;width:1360.70px;height:1.00px;background:#dfe0e4;"></div>
<div class="r" style="left:596.80px;top:525.00px;width:1.00px;height:297.80px;background:#dfe0e4;"></div>
<div class="r" style="left:702.17px;top:525.00px;width:1.00px;height:297.80px;background:#dfe0e4;"></div>
<div class="r" style="left:807.54px;top:525.00px;width:1.00px;height:297.80px;background:#dfe0e4;"></div>
<div class="r" style="left:912.91px;top:525.00px;width:1.00px;height:297.80px;background:#dfe0e4;"></div>
<div class="r" style="left:1018.28px;top:525.00px;width:1.00px;height:297.80px;background:#dfe0e4;"></div>
<div class="r" style="left:1123.65px;top:525.00px;width:1.00px;height:297.80px;background:#dfe0e4;"></div>
<div class="r" style="left:1229.02px;top:525.00px;width:1.00px;height:297.80px;background:#dfe0e4;"></div>
<div class="r" style="left:1334.39px;top:525.00px;width:1.00px;height:297.80px;background:#dfe0e4;"></div>
<div class="r" style="left:1439.76px;top:525.00px;width:1.00px;height:297.80px;background:#dfe0e4;"></div>
<div class="r" style="left:1545.13px;top:525.00px;width:1.00px;height:297.80px;background:#dfe0e4;"></div>
<div class="r" style="left:1650.50px;top:525.00px;width:1.00px;height:297.80px;background:#dfe0e4;"></div>
<div class="r" style="left:1755.87px;top:525.00px;width:1.00px;height:297.80px;background:#dfe0e4;"></div>
<div class="r" style="left:1861.20px;top:525.00px;width:1.00px;height:297.80px;background:#dfe0e4;"></div>
<div class="r" style="left:501.00px;top:525.00px;width:1.00px;height:297.80px;background:#dfe0e4;"></div>
<div class="r" style="left:501.00px;top:642.62px;width:1360.70px;height:2.00px;background:#d6d7db;"></div>
<div class="r" style="left:501.00px;top:761.74px;width:1360.70px;height:2.00px;background:#d6d7db;"></div>
</body></html>
